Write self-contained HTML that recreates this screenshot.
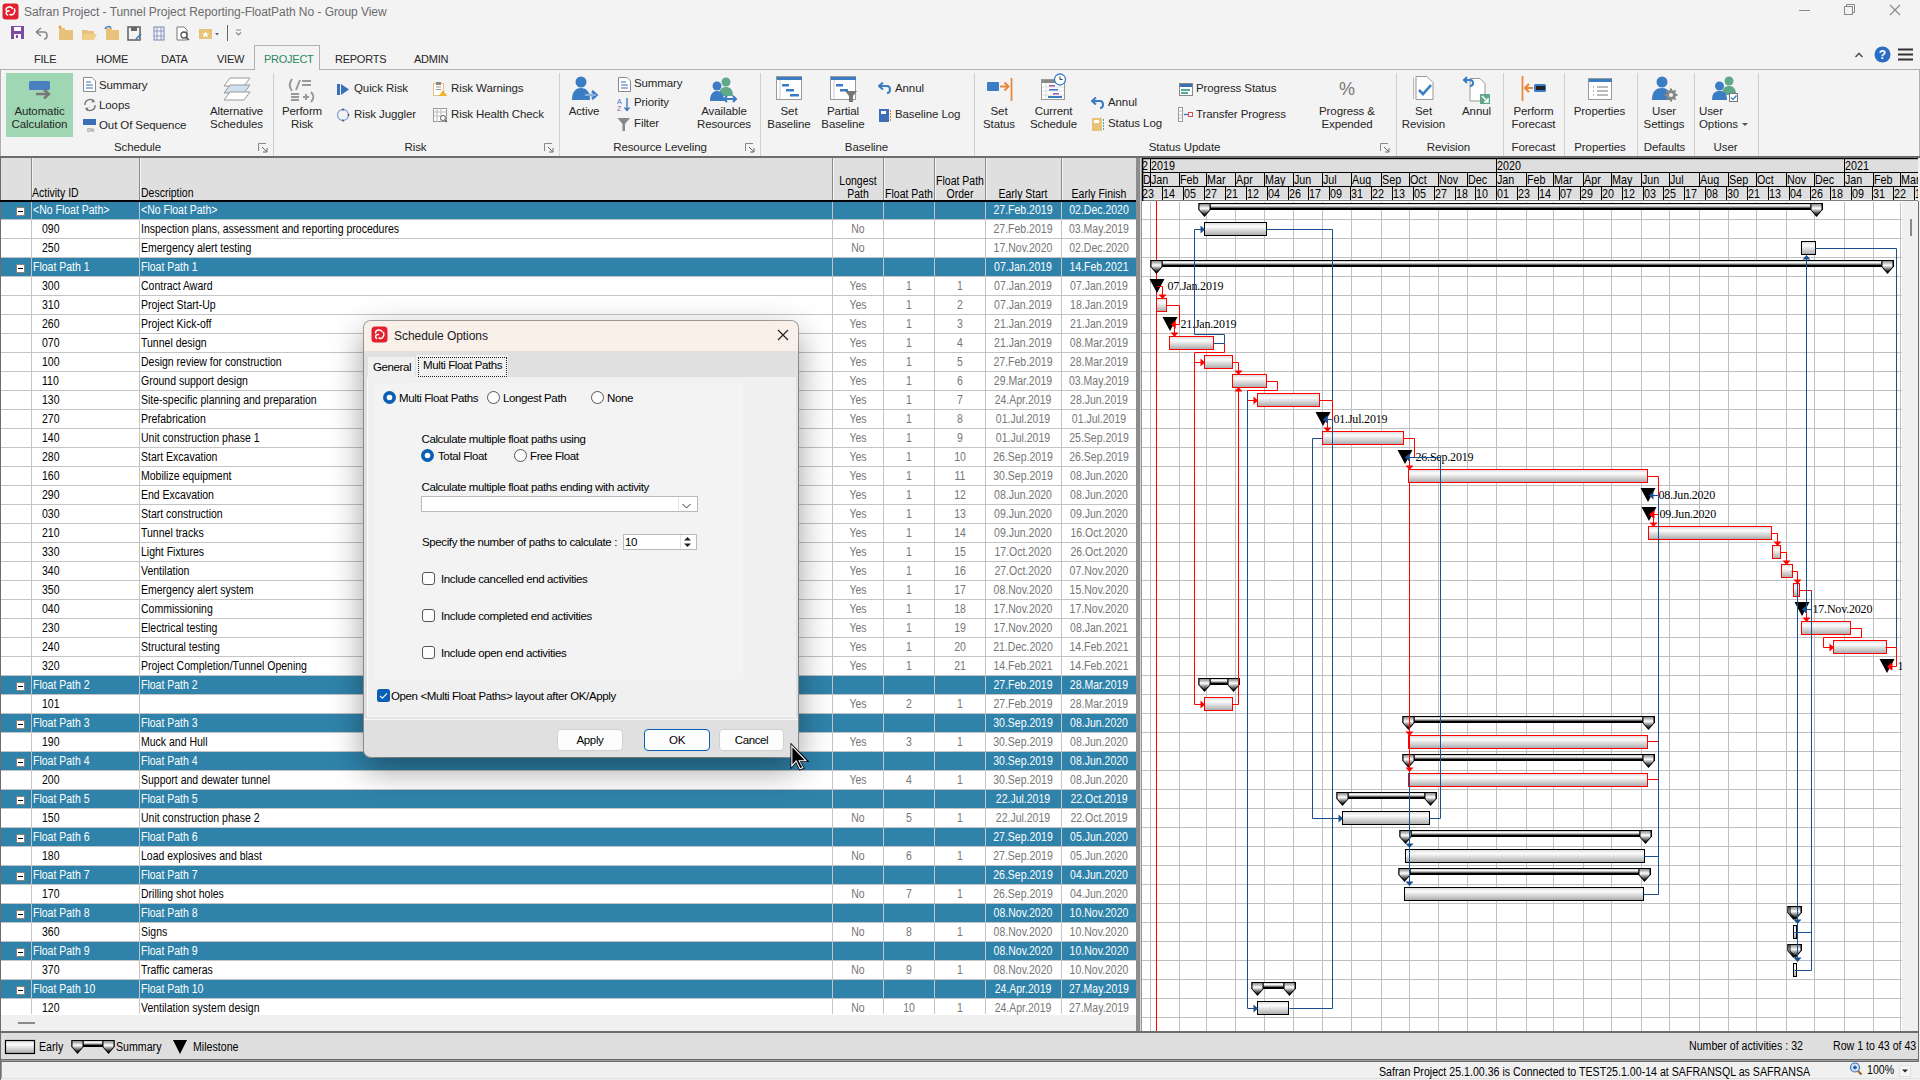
<!DOCTYPE html><html><head><meta charset="utf-8"><style>
html,body{margin:0;padding:0;width:1920px;height:1080px;overflow:hidden;background:#f3f3f3;font-family:"Liberation Sans",sans-serif;}
#root{position:relative;width:1920px;height:1080px;overflow:hidden;}
svg{position:absolute;left:0;top:0;}
</style></head><body><div id="root">
<div style="position:absolute;left:0px;top:0px;width:1920px;height:157px;background:#f3f3f3;"></div>
<svg width="20" height="22" style="left:1px;top:2px"><rect x="1.5" y="1.5" width="16" height="16" rx="3" fill="#e0202e"/>
<path d="M5 8 C5 4.5 10 4 11.5 6.5 M13.5 7 C15 10 12 14 9 12.5 M6.5 13 C4 11 5.5 8.5 8 9" stroke="#fff" stroke-width="1.6" fill="none" stroke-linecap="round"/></svg>
<div style="position:absolute;left:24px;top:6.34px;font-size:12px;line-height:12px;color:#6b6b6b;letter-spacing:-0.05px;font-family:'Liberation Sans', sans-serif;white-space:nowrap;">Safran Project - Tunnel Project Reporting-FloatPath No - Group View</div>
<svg width="1920" height="24" style="left:0;top:0">
<line x1="1799" y1="10.5" x2="1810" y2="10.5" stroke="#888" stroke-width="1"/>
<rect x="1844.5" y="6.5" width="8" height="8" fill="none" stroke="#888"/><path d="M1846.5 6.5 V4.5 H1854.5 V12.5 H1852.5" fill="none" stroke="#888"/>
<path d="M1890 5 L1900 15 M1900 5 L1890 15" stroke="#888" stroke-width="1.1"/>
</svg>
<svg width="260" height="24" style="left:0;top:22px">
<g transform="translate(11,4)"><rect x="0" y="0" width="13" height="13" fill="#7f4aa3"/><rect x="3" y="1" width="7" height="4" fill="#fff"/><rect x="3" y="8" width="7" height="5" fill="#fff"/><rect x="5" y="9" width="2" height="3" fill="#7f4aa3"/></g>
<path d="M36 10 L41 6 M36 10 L41 14 M36 10 H44 C48 10 48 17 44 17" stroke="#888" stroke-width="1.6" fill="none"/>
<g transform="translate(58,4)"><rect x="1" y="4" width="14" height="10" fill="#e8c27a"/><rect x="1" y="2" width="6" height="3" fill="#e8c27a"/><circle cx="2" cy="1" r="1.5" fill="#f0a030"/></g>
<g transform="translate(81,5)"><path d="M1 3 H6 L7 4 H13 V12 H1 Z" fill="#e8c27a"/><path d="M3 7 H16 L13 13 H1 Z" fill="#f0cf8a"/></g>
<g transform="translate(104,4)"><rect x="2" y="4" width="13" height="10" fill="#e8c27a"/><rect x="2" y="2" width="6" height="3" fill="#e8c27a"/><path d="M1 3 C2 0 6 0 7 2" stroke="#3b7dc4" stroke-width="1.5" fill="none"/></g>
<g transform="translate(127,4)"><rect x="1" y="1" width="12" height="13" fill="none" stroke="#666" stroke-width="1.6"/><rect x="4" y="1" width="6" height="4" fill="#666"/><path d="M9 13 L14 8" stroke="#3b7dc4" stroke-width="1.6"/></g>
<g transform="translate(153,4)"><rect x="1" y="1" width="10" height="13" fill="none" stroke="#7788bb" stroke-width="1"/><path d="M4 1 V14 M8 1 V14 M1 5 H11 M1 10 H11" stroke="#7788bb" stroke-width="0.8"/></g>
<g transform="translate(176,4)"><path d="M1 1 H8 L11 4 V14 H1 Z" fill="#fff" stroke="#777"/><circle cx="8" cy="9" r="3" fill="none" stroke="#555" stroke-width="1.3"/><path d="M10 11 L13 14" stroke="#555" stroke-width="1.5"/></g>
<g transform="translate(199,5)"><rect x="0" y="2" width="13" height="10" fill="#e8c27a"/><path d="M6.5 4 L7.5 6.5 L10 6.5 L8 8 L9 10.5 L6.5 9 L4 10.5 L5 8 L3 6.5 L5.5 6.5 Z" fill="#fff"/><path d="M16 6 H20 L18 8.5 Z" fill="#666"/></g>
<line x1="227.5" y1="3" x2="227.5" y2="19" stroke="#666"/>
<path d="M236 8 H241 M236 10.5 L238.5 13 L241 10.5" stroke="#888" stroke-width="1.2" fill="none"/>
</svg>
<div style="position:absolute;left:34px;top:54.49px;font-size:11px;line-height:11px;color:#262626;letter-spacing:-0.25px;font-family:'Liberation Sans', sans-serif;white-space:nowrap;">FILE</div>
<div style="position:absolute;left:96px;top:54.49px;font-size:11px;line-height:11px;color:#262626;letter-spacing:-0.25px;font-family:'Liberation Sans', sans-serif;white-space:nowrap;">HOME</div>
<div style="position:absolute;left:161px;top:54.49px;font-size:11px;line-height:11px;color:#262626;letter-spacing:-0.25px;font-family:'Liberation Sans', sans-serif;white-space:nowrap;">DATA</div>
<div style="position:absolute;left:217px;top:54.49px;font-size:11px;line-height:11px;color:#262626;letter-spacing:-0.25px;font-family:'Liberation Sans', sans-serif;white-space:nowrap;">VIEW</div>
<div style="position:absolute;left:335px;top:54.49px;font-size:11px;line-height:11px;color:#262626;letter-spacing:-0.25px;font-family:'Liberation Sans', sans-serif;white-space:nowrap;">REPORTS</div>
<div style="position:absolute;left:414px;top:54.49px;font-size:11px;line-height:11px;color:#262626;letter-spacing:-0.25px;font-family:'Liberation Sans', sans-serif;white-space:nowrap;">ADMIN</div>
<div style="position:absolute;left:254px;top:45px;width:66px;height:25px;border:1px solid #b0b0b0;border-bottom:none;background:#f3f3f3;box-sizing:border-box"></div>
<div style="position:absolute;left:264px;top:54.49px;font-size:11px;line-height:11px;color:#2b8a5e;letter-spacing:-0.25px;font-family:'Liberation Sans', sans-serif;white-space:nowrap;">PROJECT</div>
<div style="position:absolute;left:0px;top:69px;width:255px;height:1px;background:#b0b0b0;"></div>
<div style="position:absolute;left:319px;top:69px;width:1601px;height:1px;background:#b0b0b0;"></div>
<div style="position:absolute;left:0px;top:69px;width:1px;height:88px;background:#b0b0b0;"></div>
<div style="position:absolute;left:1919px;top:69px;width:1px;height:88px;background:#b0b0b0;"></div>
<svg width="80" height="24" style="left:1845px;top:43px">
<path d="M10.5 14 L14 10.5 L17.5 14" stroke="#555" stroke-width="1.6" fill="none"/>
<circle cx="37.5" cy="11.5" r="8" fill="#2b6cc4"/><text x="37.5" y="16" text-anchor="middle" font-family="Liberation Sans" font-weight="bold" font-size="12" fill="#fff">?</text>
<path d="M53 6.5 H68 M53 11.5 H68 M53 16.5 H68" stroke="#333" stroke-width="1.8"/>
</svg>
<div style="position:absolute;left:0px;top:156px;width:1920px;height:2px;background:#6d6d6d;"></div>
<div style="position:absolute;left:273px;top:73px;width:1px;height:83px;background:#d0d0d0;"></div>
<div style="position:absolute;left:559px;top:73px;width:1px;height:83px;background:#d0d0d0;"></div>
<div style="position:absolute;left:760px;top:73px;width:1px;height:83px;background:#d0d0d0;"></div>
<div style="position:absolute;left:974px;top:73px;width:1px;height:83px;background:#d0d0d0;"></div>
<div style="position:absolute;left:1396px;top:73px;width:1px;height:83px;background:#d0d0d0;"></div>
<div style="position:absolute;left:1503px;top:73px;width:1px;height:83px;background:#d0d0d0;"></div>
<div style="position:absolute;left:1564px;top:73px;width:1px;height:83px;background:#d0d0d0;"></div>
<div style="position:absolute;left:1637px;top:73px;width:1px;height:83px;background:#d0d0d0;"></div>
<div style="position:absolute;left:1694px;top:73px;width:1px;height:83px;background:#d0d0d0;"></div>
<div style="position:absolute;left:1758px;top:73px;width:1px;height:83px;background:#d0d0d0;"></div>
<div style="position:absolute;left:-12.5px;width:300px;text-align:center;top:141.67px;font-size:11.5px;line-height:11.5px;color:#262626;letter-spacing:-0.1px;font-family:'Liberation Sans', sans-serif;white-space:nowrap;">Schedule</div>
<div style="position:absolute;left:265.5px;width:300px;text-align:center;top:141.67px;font-size:11.5px;line-height:11.5px;color:#262626;letter-spacing:-0.1px;font-family:'Liberation Sans', sans-serif;white-space:nowrap;">Risk</div>
<div style="position:absolute;left:510px;width:300px;text-align:center;top:141.67px;font-size:11.5px;line-height:11.5px;color:#262626;letter-spacing:-0.1px;font-family:'Liberation Sans', sans-serif;white-space:nowrap;">Resource Leveling</div>
<div style="position:absolute;left:716.5px;width:300px;text-align:center;top:141.67px;font-size:11.5px;line-height:11.5px;color:#262626;letter-spacing:-0.1px;font-family:'Liberation Sans', sans-serif;white-space:nowrap;">Baseline</div>
<div style="position:absolute;left:1034.5px;width:300px;text-align:center;top:141.67px;font-size:11.5px;line-height:11.5px;color:#262626;letter-spacing:-0.1px;font-family:'Liberation Sans', sans-serif;white-space:nowrap;">Status Update</div>
<div style="position:absolute;left:1298.5px;width:300px;text-align:center;top:141.67px;font-size:11.5px;line-height:11.5px;color:#262626;letter-spacing:-0.1px;font-family:'Liberation Sans', sans-serif;white-space:nowrap;">Revision</div>
<div style="position:absolute;left:1383.5px;width:300px;text-align:center;top:141.67px;font-size:11.5px;line-height:11.5px;color:#262626;letter-spacing:-0.1px;font-family:'Liberation Sans', sans-serif;white-space:nowrap;">Forecast</div>
<div style="position:absolute;left:1450px;width:300px;text-align:center;top:141.67px;font-size:11.5px;line-height:11.5px;color:#262626;letter-spacing:-0.1px;font-family:'Liberation Sans', sans-serif;white-space:nowrap;">Properties</div>
<div style="position:absolute;left:1514.5px;width:300px;text-align:center;top:141.67px;font-size:11.5px;line-height:11.5px;color:#262626;letter-spacing:-0.1px;font-family:'Liberation Sans', sans-serif;white-space:nowrap;">Defaults</div>
<div style="position:absolute;left:1575.5px;width:300px;text-align:center;top:141.67px;font-size:11.5px;line-height:11.5px;color:#262626;letter-spacing:-0.1px;font-family:'Liberation Sans', sans-serif;white-space:nowrap;">User</div>
<svg width="10" height="10" style="left:258px;top:143px"><path d="M0.5 8 V0.5 H8" stroke="#888" fill="none"/><path d="M4 4 L8.5 8.5 M5 9 H9 V5" stroke="#666" fill="none"/></svg>
<svg width="10" height="10" style="left:544px;top:143px"><path d="M0.5 8 V0.5 H8" stroke="#888" fill="none"/><path d="M4 4 L8.5 8.5 M5 9 H9 V5" stroke="#666" fill="none"/></svg>
<svg width="10" height="10" style="left:745px;top:143px"><path d="M0.5 8 V0.5 H8" stroke="#888" fill="none"/><path d="M4 4 L8.5 8.5 M5 9 H9 V5" stroke="#666" fill="none"/></svg>
<svg width="10" height="10" style="left:1380px;top:143px"><path d="M0.5 8 V0.5 H8" stroke="#888" fill="none"/><path d="M4 4 L8.5 8.5 M5 9 H9 V5" stroke="#666" fill="none"/></svg>
<div style="position:absolute;left:6px;top:73px;width:67px;height:64px;background:#9fd6b3;"></div>
<svg width="40" height="30" style="left:25px;top:76px"><rect x="4" y="5" width="21" height="9" rx="1.5" fill="#4a7fc1"/>
<path d="M11 18 H24 M19 13.5 L24 18 L19 22.5" stroke="#777" stroke-width="2.4" fill="none"/></svg>
<div style="position:absolute;left:-110.5px;width:300px;text-align:center;top:105.87px;font-size:11.5px;line-height:11.5px;color:#262626;letter-spacing:-0.1px;font-family:'Liberation Sans', sans-serif;white-space:nowrap;">Automatic</div>
<div style="position:absolute;left:-110.5px;width:300px;text-align:center;top:118.97px;font-size:11.5px;line-height:11.5px;color:#262626;letter-spacing:-0.1px;font-family:'Liberation Sans', sans-serif;white-space:nowrap;">Calculation</div>
<svg width="14" height="16" style="left:83px;top:77px"><path d="M0.5 0.5 H9 L12.5 4 V14.5 H0.5 Z" fill="#fff" stroke="#8a8a8a"/><path d="M3 5 H8 M3 8 H10 M3 11 H10" stroke="#3b6fb8" stroke-width="1.2"/></svg>
<div style="position:absolute;left:99px;top:79.92px;font-size:11.5px;line-height:11.5px;color:#262626;letter-spacing:-0.1px;font-family:'Liberation Sans', sans-serif;white-space:nowrap;">Summary</div>
<svg width="16" height="16" style="left:82px;top:97px"><path d="M3 8 A5 5 0 0 1 12 4.5 M13 8 A5 5 0 0 1 4 11.5" stroke="#777" stroke-width="1.4" fill="none"/><path d="M11 2 L13 5 L9.5 5.5 Z M5 14 L3 11 L6.5 10.5 Z" fill="#777"/></svg>
<div style="position:absolute;left:99px;top:99.92px;font-size:11.5px;line-height:11.5px;color:#262626;letter-spacing:-0.1px;font-family:'Liberation Sans', sans-serif;white-space:nowrap;">Loops</div>
<svg width="16" height="16" style="left:83px;top:118px"><rect x="0" y="1" width="13" height="6" fill="#3b6fb8"/><text x="4" y="14" font-size="5" fill="#666" font-family="Liberation Sans">0%</text></svg>
<div style="position:absolute;left:99px;top:120.17px;font-size:11.5px;line-height:11.5px;color:#262626;letter-spacing:-0.1px;font-family:'Liberation Sans', sans-serif;white-space:nowrap;">Out Of Sequence</div>
<svg width="16" height="16" style="left:337px;top:83px"><rect x="0" y="1" width="3" height="11" fill="#3b6fb8"/><path d="M4 1 L12 6.5 L4 12 Z" fill="#3b6fb8"/></svg>
<div style="position:absolute;left:354px;top:83.17px;font-size:11.5px;line-height:11.5px;color:#262626;letter-spacing:-0.1px;font-family:'Liberation Sans', sans-serif;white-space:nowrap;">Quick Risk</div>
<svg width="16" height="16" style="left:336px;top:108px"><circle cx="7" cy="7" r="5.5" fill="none" stroke="#7fa7d8" stroke-width="1.3"/><circle cx="7" cy="1.5" r="1" fill="#555"/><circle cx="12.5" cy="7" r="1" fill="#555"/><circle cx="7" cy="12.5" r="1" fill="#555"/></svg>
<div style="position:absolute;left:354px;top:108.87px;font-size:11.5px;line-height:11.5px;color:#262626;letter-spacing:-0.1px;font-family:'Liberation Sans', sans-serif;white-space:nowrap;">Risk Juggler</div>
<svg width="16" height="16" style="left:433px;top:81px"><rect x="0.5" y="2.5" width="10" height="12" fill="#fff" stroke="#e8c27a"/><rect x="3" y="1" width="5" height="3" fill="#888"/><path d="M3 6 H8 M3 8.5 H8" stroke="#999"/><path d="M10 9 L14 15 H6 Z" fill="#f0b030"/></svg>
<div style="position:absolute;left:451px;top:83.17px;font-size:11.5px;line-height:11.5px;color:#262626;letter-spacing:-0.1px;font-family:'Liberation Sans', sans-serif;white-space:nowrap;">Risk Warnings</div>
<svg width="16" height="16" style="left:433px;top:108px"><rect x="0.5" y="0.5" width="13" height="13" fill="#fff" stroke="#999"/><path d="M4 0.5 V13.5 M8 0.5 V13.5 M0.5 4 H13.5 M0.5 8 H13.5" stroke="#bbb"/><circle cx="10" cy="10" r="2.5" fill="#fff" stroke="#666"/><path d="M12 12 L14 14" stroke="#666" stroke-width="1.4"/></svg>
<div style="position:absolute;left:451px;top:108.87px;font-size:11.5px;line-height:11.5px;color:#262626;letter-spacing:-0.1px;font-family:'Liberation Sans', sans-serif;white-space:nowrap;">Risk Health Check</div>
<svg width="14" height="16" style="left:618px;top:77px"><path d="M0.5 0.5 H9 L12.5 4 V14.5 H0.5 Z" fill="#fff" stroke="#8a8a8a"/><path d="M3 5 H8 M3 8 H10 M3 11 H10" stroke="#3b6fb8" stroke-width="1.2"/></svg>
<div style="position:absolute;left:634px;top:77.92px;font-size:11.5px;line-height:11.5px;color:#262626;letter-spacing:-0.1px;font-family:'Liberation Sans', sans-serif;white-space:nowrap;">Summary</div>
<svg width="16" height="16" style="left:617px;top:97px"><text x="0" y="7" font-size="7" fill="#3b6fb8" font-family="Liberation Sans">A</text><text x="0" y="14" font-size="7" fill="#9b59b6" font-family="Liberation Sans">Z</text><path d="M10 1 V13 M7.5 10.5 L10 13.5 L12.5 10.5" stroke="#3b6fb8" stroke-width="1.3" fill="none"/></svg>
<div style="position:absolute;left:634px;top:97.47px;font-size:11.5px;line-height:11.5px;color:#262626;letter-spacing:-0.1px;font-family:'Liberation Sans', sans-serif;white-space:nowrap;">Priority</div>
<svg width="16" height="16" style="left:617px;top:117px"><path d="M0.5 1 H13 L8 7 V14 H5.5 V7 Z" fill="#888"/></svg>
<div style="position:absolute;left:634px;top:117.77px;font-size:11.5px;line-height:11.5px;color:#262626;letter-spacing:-0.1px;font-family:'Liberation Sans', sans-serif;white-space:nowrap;">Filter</div>
<svg width="16" height="16" style="left:878px;top:81px"><path d="M2 5 H9 C13 5 13 12 9 12" stroke="#3b7dc4" stroke-width="2" fill="none"/><path d="M5 1.5 L1 5 L5 8.5" stroke="#3b7dc4" stroke-width="2" fill="none"/></svg>
<div style="position:absolute;left:895px;top:83.17px;font-size:11.5px;line-height:11.5px;color:#262626;letter-spacing:-0.1px;font-family:'Liberation Sans', sans-serif;white-space:nowrap;">Annul</div>
<svg width="16" height="16" style="left:878px;top:108px"><rect x="1" y="1" width="10" height="13" fill="#3b6fb8"/><rect x="3" y="3" width="5" height="3" fill="#fff"/><path d="M12.5 2 V13" stroke="#e67e22" stroke-width="1" stroke-dasharray="2 1"/></svg>
<div style="position:absolute;left:895px;top:108.87px;font-size:11.5px;line-height:11.5px;color:#262626;letter-spacing:-0.1px;font-family:'Liberation Sans', sans-serif;white-space:nowrap;">Baseline Log</div>
<svg width="16" height="16" style="left:1091px;top:96px"><path d="M2 5 H9 C13 5 13 12 9 12" stroke="#3b7dc4" stroke-width="2" fill="none"/><path d="M5 1.5 L1 5 L5 8.5" stroke="#3b7dc4" stroke-width="2" fill="none"/></svg>
<div style="position:absolute;left:1108px;top:97.47px;font-size:11.5px;line-height:11.5px;color:#262626;letter-spacing:-0.1px;font-family:'Liberation Sans', sans-serif;white-space:nowrap;">Annul</div>
<svg width="16" height="16" style="left:1091px;top:117px"><rect x="1" y="1" width="10" height="13" fill="#e8c27a"/><rect x="3" y="3" width="5" height="3" fill="#fff"/><path d="M12.5 2 V13" stroke="#4a9" stroke-width="1" stroke-dasharray="2 1"/></svg>
<div style="position:absolute;left:1108px;top:117.77px;font-size:11.5px;line-height:11.5px;color:#262626;letter-spacing:-0.1px;font-family:'Liberation Sans', sans-serif;white-space:nowrap;">Status Log</div>
<svg width="16" height="16" style="left:1179px;top:83px"><rect x="0.5" y="0.5" width="13" height="12" fill="#fff" stroke="#888"/><rect x="1" y="1" width="12" height="3" fill="#3b6fb8"/><rect x="2" y="6" width="9" height="2" fill="#5a9"/><rect x="2" y="9" width="7" height="2" fill="#5a9"/></svg>
<div style="position:absolute;left:1196px;top:83.17px;font-size:11.5px;line-height:11.5px;color:#262626;letter-spacing:-0.1px;font-family:'Liberation Sans', sans-serif;white-space:nowrap;">Progress Status</div>
<svg width="18" height="16" style="left:1178px;top:107px"><rect x="0.5" y="0.5" width="4" height="14" fill="#fff" stroke="#999"/><path d="M0.5 4 H4.5 M0.5 8 H4.5 M0.5 11 H4.5" stroke="#bbb"/><path d="M6 7.5 H10" stroke="#3b6fb8" stroke-width="1.3"/><rect x="10.5" y="5.5" width="4" height="4" fill="#fff" stroke="#e05050"/></svg>
<div style="position:absolute;left:1196px;top:108.87px;font-size:11.5px;line-height:11.5px;color:#262626;letter-spacing:-0.1px;font-family:'Liberation Sans', sans-serif;white-space:nowrap;">Transfer Progress</div>
<div style="position:absolute;left:86.5px;width:300px;text-align:center;top:105.87px;font-size:11.5px;line-height:11.5px;color:#262626;letter-spacing:-0.1px;font-family:'Liberation Sans', sans-serif;white-space:nowrap;">Alternative</div>
<div style="position:absolute;left:86.5px;width:300px;text-align:center;top:118.87px;font-size:11.5px;line-height:11.5px;color:#262626;letter-spacing:-0.1px;font-family:'Liberation Sans', sans-serif;white-space:nowrap;">Schedules</div>
<div style="position:absolute;left:152px;width:300px;text-align:center;top:105.87px;font-size:11.5px;line-height:11.5px;color:#262626;letter-spacing:-0.1px;font-family:'Liberation Sans', sans-serif;white-space:nowrap;">Perform</div>
<div style="position:absolute;left:152px;width:300px;text-align:center;top:118.87px;font-size:11.5px;line-height:11.5px;color:#262626;letter-spacing:-0.1px;font-family:'Liberation Sans', sans-serif;white-space:nowrap;">Risk</div>
<div style="position:absolute;left:434px;width:300px;text-align:center;top:105.87px;font-size:11.5px;line-height:11.5px;color:#262626;letter-spacing:-0.1px;font-family:'Liberation Sans', sans-serif;white-space:nowrap;">Active</div>
<div style="position:absolute;left:574px;width:300px;text-align:center;top:105.87px;font-size:11.5px;line-height:11.5px;color:#262626;letter-spacing:-0.1px;font-family:'Liberation Sans', sans-serif;white-space:nowrap;">Available</div>
<div style="position:absolute;left:574px;width:300px;text-align:center;top:118.87px;font-size:11.5px;line-height:11.5px;color:#262626;letter-spacing:-0.1px;font-family:'Liberation Sans', sans-serif;white-space:nowrap;">Resources</div>
<div style="position:absolute;left:639px;width:300px;text-align:center;top:105.87px;font-size:11.5px;line-height:11.5px;color:#262626;letter-spacing:-0.1px;font-family:'Liberation Sans', sans-serif;white-space:nowrap;">Set</div>
<div style="position:absolute;left:639px;width:300px;text-align:center;top:118.87px;font-size:11.5px;line-height:11.5px;color:#262626;letter-spacing:-0.1px;font-family:'Liberation Sans', sans-serif;white-space:nowrap;">Baseline</div>
<div style="position:absolute;left:693px;width:300px;text-align:center;top:105.87px;font-size:11.5px;line-height:11.5px;color:#262626;letter-spacing:-0.1px;font-family:'Liberation Sans', sans-serif;white-space:nowrap;">Partial</div>
<div style="position:absolute;left:693px;width:300px;text-align:center;top:118.87px;font-size:11.5px;line-height:11.5px;color:#262626;letter-spacing:-0.1px;font-family:'Liberation Sans', sans-serif;white-space:nowrap;">Baseline</div>
<div style="position:absolute;left:849px;width:300px;text-align:center;top:105.87px;font-size:11.5px;line-height:11.5px;color:#262626;letter-spacing:-0.1px;font-family:'Liberation Sans', sans-serif;white-space:nowrap;">Set</div>
<div style="position:absolute;left:849px;width:300px;text-align:center;top:118.87px;font-size:11.5px;line-height:11.5px;color:#262626;letter-spacing:-0.1px;font-family:'Liberation Sans', sans-serif;white-space:nowrap;">Status</div>
<div style="position:absolute;left:903.5px;width:300px;text-align:center;top:105.87px;font-size:11.5px;line-height:11.5px;color:#262626;letter-spacing:-0.1px;font-family:'Liberation Sans', sans-serif;white-space:nowrap;">Current</div>
<div style="position:absolute;left:903.5px;width:300px;text-align:center;top:118.87px;font-size:11.5px;line-height:11.5px;color:#262626;letter-spacing:-0.1px;font-family:'Liberation Sans', sans-serif;white-space:nowrap;">Schedule</div>
<div style="position:absolute;left:1197px;width:300px;text-align:center;top:105.87px;font-size:11.5px;line-height:11.5px;color:#262626;letter-spacing:-0.1px;font-family:'Liberation Sans', sans-serif;white-space:nowrap;">Progress &amp;</div>
<div style="position:absolute;left:1197px;width:300px;text-align:center;top:118.87px;font-size:11.5px;line-height:11.5px;color:#262626;letter-spacing:-0.1px;font-family:'Liberation Sans', sans-serif;white-space:nowrap;">Expended</div>
<div style="position:absolute;left:1273.5px;width:300px;text-align:center;top:105.87px;font-size:11.5px;line-height:11.5px;color:#262626;letter-spacing:-0.1px;font-family:'Liberation Sans', sans-serif;white-space:nowrap;">Set</div>
<div style="position:absolute;left:1273.5px;width:300px;text-align:center;top:118.87px;font-size:11.5px;line-height:11.5px;color:#262626;letter-spacing:-0.1px;font-family:'Liberation Sans', sans-serif;white-space:nowrap;">Revision</div>
<div style="position:absolute;left:1326.5px;width:300px;text-align:center;top:105.87px;font-size:11.5px;line-height:11.5px;color:#262626;letter-spacing:-0.1px;font-family:'Liberation Sans', sans-serif;white-space:nowrap;">Annul</div>
<div style="position:absolute;left:1383.5px;width:300px;text-align:center;top:105.87px;font-size:11.5px;line-height:11.5px;color:#262626;letter-spacing:-0.1px;font-family:'Liberation Sans', sans-serif;white-space:nowrap;">Perform</div>
<div style="position:absolute;left:1383.5px;width:300px;text-align:center;top:118.87px;font-size:11.5px;line-height:11.5px;color:#262626;letter-spacing:-0.1px;font-family:'Liberation Sans', sans-serif;white-space:nowrap;">Forecast</div>
<div style="position:absolute;left:1449.5px;width:300px;text-align:center;top:105.87px;font-size:11.5px;line-height:11.5px;color:#262626;letter-spacing:-0.1px;font-family:'Liberation Sans', sans-serif;white-space:nowrap;">Properties</div>
<div style="position:absolute;left:1514px;width:300px;text-align:center;top:105.87px;font-size:11.5px;line-height:11.5px;color:#262626;letter-spacing:-0.1px;font-family:'Liberation Sans', sans-serif;white-space:nowrap;">User</div>
<div style="position:absolute;left:1514px;width:300px;text-align:center;top:118.87px;font-size:11.5px;line-height:11.5px;color:#262626;letter-spacing:-0.1px;font-family:'Liberation Sans', sans-serif;white-space:nowrap;">Settings</div>
<div style="position:absolute;left:1699px;top:105.87px;font-size:11.5px;line-height:11.5px;color:#262626;letter-spacing:-0.1px;font-family:'Liberation Sans', sans-serif;white-space:nowrap;">User</div>
<div style="position:absolute;left:1699px;top:118.87px;font-size:11.5px;line-height:11.5px;color:#262626;letter-spacing:-0.1px;font-family:'Liberation Sans', sans-serif;white-space:nowrap;">Options</div>
<svg width="8" height="6" style="left:1742px;top:123px"><path d="M0 0 H6 L3 3 Z" fill="#555"/></svg>
<svg width="1920" height="110" style="left:0;top:70px">
<g transform="translate(224,8)"><path d="M6 0 H26 L20 8 H0 Z" fill="#fff" stroke="#999"/><path d="M6 7 H26 L20 15 H0 Z" fill="#cfe0f1" stroke="#999"/><path d="M6 14 H26 L20 22 H0 Z" fill="#fff" stroke="#999"/></g>
<g transform="translate(289,8)" fill="none" stroke="#999" stroke-width="2"><path d="M3 1 C0 5 0 9 3 13"/><path d="M7 12 L11 2"/><path d="M13 3 H22 M13 7 H22 M2 16 H10 M2 19 H10 M2 22 H10"/><path d="M14 19 H20 M17 16 V22"/><path d="M22 14 C25 17 25 21 22 24"/></g>
<g transform="translate(572,6)"><circle cx="9" cy="6" r="5.5" fill="#3b7dc4"/><path d="M0 24 C0 15 4 12 9 12 C14 12 18 15 18 24 Z" fill="#3b7dc4"/><path d="M13 19 H24 M20 15 L24.5 19 L20 23" stroke="#3b7dc4" stroke-width="2.6" fill="none"/><path d="M13 19 H24" stroke="#fff" stroke-width="0.8"/></g>
<g transform="translate(710,6)"><circle cx="16" cy="6" r="4.5" fill="#5fa88a"/><path d="M9 20 C9 13 12 11 16 11 C20 11 23 13 23 20 Z" fill="#5fa88a"/><circle cx="7" cy="10" r="4.5" fill="#3b7dc4"/><path d="M0 25 C0 18 3 15 7 15 C11 15 14 18 14 25 Z" fill="#3b7dc4"/><path d="M14 23 H26 M17 20 L14 23 L17 26 M23 20 L26 23 L23 26" stroke="#3b7dc4" stroke-width="2" fill="none"/></g>
<g transform="translate(776,6)"><rect x="0.5" y="0.5" width="25" height="23" fill="#fff" stroke="#999"/><rect x="1" y="1" width="25" height="3" fill="#3b7dc4"/><path d="M4 4 V23" stroke="#ccc"/><rect x="6" y="8" width="7" height="2.5" fill="#3b7dc4"/><rect x="10" y="13" width="8" height="2.5" fill="#3b7dc4"/><rect x="14" y="18" width="9" height="2.5" fill="#3b7dc4"/></g>
<g transform="translate(830,6)"><rect x="0.5" y="0.5" width="25" height="23" fill="#fff" stroke="#999"/><rect x="1" y="1" width="25" height="3" fill="#3b7dc4"/><path d="M4 4 V23" stroke="#ccc"/><rect x="6" y="8" width="7" height="2.5" fill="#3b7dc4"/><rect x="10" y="13" width="8" height="2.5" fill="#3b7dc4"/><path d="M15 15 H27 L23 20 V26 H19 V20 Z" fill="#777"/></g>
<g transform="translate(987,8)"><rect x="0" y="4" width="12" height="9" rx="1" fill="#3b7dc4"/><path d="M13 8.5 H21 M17.5 4.5 L21.5 8.5 L17.5 12.5" stroke="#e8883a" stroke-width="2" fill="none"/><path d="M24.5 0 V23" stroke="#e8883a" stroke-width="1.8"/></g>
<g transform="translate(1041,4)"><rect x="0.5" y="5.5" width="23" height="20" fill="#fff" stroke="#999"/><rect x="1" y="6" width="23" height="3" fill="#888"/><path d="M5 9 V25 M1 13 H23 M1 17 H23 M1 21 H23" stroke="#ddd"/><rect x="8" y="11" width="6" height="1.5" fill="#9b59b6"/><rect x="8" y="15" width="9" height="1.5" fill="#3b7dc4"/><rect x="12" y="19" width="6" height="1.5" fill="#9b59b6"/><rect x="7" y="22" width="14" height="2" fill="#3b7dc4"/><circle cx="19" cy="5.5" r="5.5" fill="#fff" stroke="#3b7dc4" stroke-width="1.3"/><path d="M19 2.5 V5.5 H21.5" stroke="#333" fill="none"/></g>
<text x="1347" y="25" text-anchor="middle" font-family="Liberation Sans" font-size="18" fill="#777">%</text>
<g transform="translate(1413,6)"><path d="M0.5 1.5 V23" stroke="#bbb"/><path d="M3 0.5 H14 L20 6.5 V23.5 H3 Z" fill="#fff" stroke="#999"/><path d="M6 14 L10 18 L18 9" stroke="#3b7dc4" stroke-width="2.6" fill="none"/></g>
<g transform="translate(1463,5)"><path d="M7 3.5 H17 L22 8.5 V26 H7 Z" fill="#fff" stroke="#999"/><path d="M2 5 H7 C11 5 11 11 7 11" stroke="#3b7dc4" stroke-width="2" fill="none"/><path d="M4 2 L1 5 L4 8" stroke="#3b7dc4" stroke-width="2" fill="none"/><rect x="17" y="19" width="10" height="10" fill="#5fa88a"/><path d="M19 21 L25 27 M21 27 H25 V23" stroke="#fff" stroke-width="1.5" fill="none"/></g>
<g transform="translate(1521,6)"><path d="M1.5 0 V25" stroke="#e8883a" stroke-width="1.8"/><path d="M4 12 H12 M8 8 L4 12 L8 16" stroke="#e8883a" stroke-width="2" fill="none"/><rect x="13" y="8" width="12" height="8" rx="1.5" fill="#3b7dc4"/><rect x="15" y="10" width="9" height="4" fill="#222"/></g>
<g transform="translate(1588,8)"><rect x="0.5" y="0.5" width="23" height="21" fill="#fff" stroke="#999"/><rect x="1" y="1" width="23" height="3" fill="#3b7dc4"/><path d="M5 9 H6 M9 9 H20 M5 13 H6 M9 13 H20 M5 17 H6 M9 17 H20" stroke="#777" stroke-width="1.1"/></g>
<g transform="translate(1652,6)"><circle cx="10" cy="6" r="5.5" fill="#3b7dc4"/><path d="M0 24 C0 15 4 12 10 12 C15 12 19 15 19 24 Z" fill="#3b7dc4"/><circle cx="19" cy="19" r="5" fill="#888"/><circle cx="19" cy="19" r="2" fill="#f3f3f3"/><path d="M19 12.5 V25.5 M12.5 19 H25.5 M14.4 14.4 L23.6 23.6 M23.6 14.4 L14.4 23.6" stroke="#888" stroke-width="2"/><circle cx="19" cy="19" r="2" fill="#f3f3f3"/></g>
<g transform="translate(1712,6)"><circle cx="17" cy="5" r="4.5" fill="#5fa88a"/><path d="M10 19 C10 12 13 10 17 10 C21 10 24 12 24 19 Z" fill="#5fa88a"/><circle cx="7.5" cy="10" r="4.5" fill="#3b7dc4"/><path d="M0 24 C0 17 3 15 7.5 15 C12 15 15 17 15 24 Z" fill="#3b7dc4"/><rect x="17.5" y="17.5" width="8" height="8" fill="#fff" stroke="#777"/><path d="M19 21.5 L21 23.5 L24.5 19.5" stroke="#3b7dc4" stroke-width="1.3" fill="none"/></g>
</svg>
<div style="position:absolute;left:0px;top:158px;width:1136px;height:43px;background:#f0f0f0;"></div>
<div style="position:absolute;left:1px;top:158px;width:1135px;height:42px;background:#dfdfdf;"></div>
<div style="position:absolute;left:0px;top:157px;width:1px;height:880px;background:#6d6d6d;"></div>
<div style="position:absolute;left:31px;top:158px;width:1px;height:42px;background:#8a8a8a;"></div>
<div style="position:absolute;left:32px;top:158px;width:1px;height:42px;background:#f4f4f4;"></div>
<div style="position:absolute;left:139px;top:158px;width:1px;height:42px;background:#8a8a8a;"></div>
<div style="position:absolute;left:140px;top:158px;width:1px;height:42px;background:#f4f4f4;"></div>
<div style="position:absolute;left:832px;top:158px;width:1px;height:42px;background:#8a8a8a;"></div>
<div style="position:absolute;left:833px;top:158px;width:1px;height:42px;background:#f4f4f4;"></div>
<div style="position:absolute;left:883px;top:158px;width:1px;height:42px;background:#8a8a8a;"></div>
<div style="position:absolute;left:884px;top:158px;width:1px;height:42px;background:#f4f4f4;"></div>
<div style="position:absolute;left:934px;top:158px;width:1px;height:42px;background:#8a8a8a;"></div>
<div style="position:absolute;left:935px;top:158px;width:1px;height:42px;background:#f4f4f4;"></div>
<div style="position:absolute;left:985px;top:158px;width:1px;height:42px;background:#8a8a8a;"></div>
<div style="position:absolute;left:986px;top:158px;width:1px;height:42px;background:#f4f4f4;"></div>
<div style="position:absolute;left:1061px;top:158px;width:1px;height:42px;background:#8a8a8a;"></div>
<div style="position:absolute;left:1062px;top:158px;width:1px;height:42px;background:#f4f4f4;"></div>
<div style="position:absolute;left:0px;top:200px;width:1136px;height:2px;background:#000;"></div>
<div style="position:absolute;left:32px;top:187.42px;font-size:12.5px;line-height:12.5px;color:#000;font-family:'Liberation Sans', sans-serif;white-space:nowrap;transform:scaleX(0.84);transform-origin:0 0;">Activity ID</div>
<div style="position:absolute;left:141px;top:187.42px;font-size:12.5px;line-height:12.5px;color:#000;font-family:'Liberation Sans', sans-serif;white-space:nowrap;transform:scaleX(0.84);transform-origin:0 0;">Description</div>
<div style="position:absolute;left:707.5px;width:300px;text-align:center;top:174.82px;font-size:12.5px;line-height:12.5px;color:#000;font-family:'Liberation Sans', sans-serif;white-space:nowrap;transform:scaleX(0.84);transform-origin:50% 0;">Longest</div>
<div style="position:absolute;left:707.5px;width:300px;text-align:center;top:187.72px;font-size:12.5px;line-height:12.5px;color:#000;font-family:'Liberation Sans', sans-serif;white-space:nowrap;transform:scaleX(0.84);transform-origin:50% 0;">Path</div>
<div style="position:absolute;left:758.5px;width:300px;text-align:center;top:187.72px;font-size:12.5px;line-height:12.5px;color:#000;font-family:'Liberation Sans', sans-serif;white-space:nowrap;transform:scaleX(0.84);transform-origin:50% 0;">Float Path</div>
<div style="position:absolute;left:809.5px;width:300px;text-align:center;top:174.82px;font-size:12.5px;line-height:12.5px;color:#000;font-family:'Liberation Sans', sans-serif;white-space:nowrap;transform:scaleX(0.84);transform-origin:50% 0;">Float Path</div>
<div style="position:absolute;left:809.5px;width:300px;text-align:center;top:187.72px;font-size:12.5px;line-height:12.5px;color:#000;font-family:'Liberation Sans', sans-serif;white-space:nowrap;transform:scaleX(0.84);transform-origin:50% 0;">Order</div>
<div style="position:absolute;left:873px;width:300px;text-align:center;top:187.72px;font-size:12.5px;line-height:12.5px;color:#000;font-family:'Liberation Sans', sans-serif;white-space:nowrap;transform:scaleX(0.84);transform-origin:50% 0;">Early Start</div>
<div style="position:absolute;left:948.5px;width:300px;text-align:center;top:187.72px;font-size:12.5px;line-height:12.5px;color:#000;font-family:'Liberation Sans', sans-serif;white-space:nowrap;transform:scaleX(0.84);transform-origin:50% 0;">Early Finish</div>
<div style="position:absolute;left:1px;top:202px;width:1135px;height:813px;background:#fff;"></div>
<div style="position:absolute;left:1px;top:202px;width:1135px;height:17px;background:#2f83ab;"></div>
<div style="position:absolute;left:1px;top:219px;width:1135px;height:1px;background:#c4c4c4;"></div>
<div style="position:absolute;left:1px;top:238px;width:1135px;height:1px;background:#c4c4c4;"></div>
<div style="position:absolute;left:1px;top:257px;width:1135px;height:1px;background:#c4c4c4;"></div>
<div style="position:absolute;left:1px;top:258px;width:1135px;height:18px;background:#2f83ab;"></div>
<div style="position:absolute;left:1px;top:276px;width:1135px;height:1px;background:#c4c4c4;"></div>
<div style="position:absolute;left:1px;top:295px;width:1135px;height:1px;background:#c4c4c4;"></div>
<div style="position:absolute;left:1px;top:314px;width:1135px;height:1px;background:#c4c4c4;"></div>
<div style="position:absolute;left:1px;top:333px;width:1135px;height:1px;background:#c4c4c4;"></div>
<div style="position:absolute;left:1px;top:352px;width:1135px;height:1px;background:#c4c4c4;"></div>
<div style="position:absolute;left:1px;top:371px;width:1135px;height:1px;background:#c4c4c4;"></div>
<div style="position:absolute;left:1px;top:390px;width:1135px;height:1px;background:#c4c4c4;"></div>
<div style="position:absolute;left:1px;top:409px;width:1135px;height:1px;background:#c4c4c4;"></div>
<div style="position:absolute;left:1px;top:428px;width:1135px;height:1px;background:#c4c4c4;"></div>
<div style="position:absolute;left:1px;top:447px;width:1135px;height:1px;background:#c4c4c4;"></div>
<div style="position:absolute;left:1px;top:466px;width:1135px;height:1px;background:#c4c4c4;"></div>
<div style="position:absolute;left:1px;top:485px;width:1135px;height:1px;background:#c4c4c4;"></div>
<div style="position:absolute;left:1px;top:504px;width:1135px;height:1px;background:#c4c4c4;"></div>
<div style="position:absolute;left:1px;top:523px;width:1135px;height:1px;background:#c4c4c4;"></div>
<div style="position:absolute;left:1px;top:542px;width:1135px;height:1px;background:#c4c4c4;"></div>
<div style="position:absolute;left:1px;top:561px;width:1135px;height:1px;background:#c4c4c4;"></div>
<div style="position:absolute;left:1px;top:580px;width:1135px;height:1px;background:#c4c4c4;"></div>
<div style="position:absolute;left:1px;top:599px;width:1135px;height:1px;background:#c4c4c4;"></div>
<div style="position:absolute;left:1px;top:618px;width:1135px;height:1px;background:#c4c4c4;"></div>
<div style="position:absolute;left:1px;top:637px;width:1135px;height:1px;background:#c4c4c4;"></div>
<div style="position:absolute;left:1px;top:656px;width:1135px;height:1px;background:#c4c4c4;"></div>
<div style="position:absolute;left:1px;top:675px;width:1135px;height:1px;background:#c4c4c4;"></div>
<div style="position:absolute;left:1px;top:676px;width:1135px;height:18px;background:#2f83ab;"></div>
<div style="position:absolute;left:1px;top:694px;width:1135px;height:1px;background:#c4c4c4;"></div>
<div style="position:absolute;left:1px;top:713px;width:1135px;height:1px;background:#c4c4c4;"></div>
<div style="position:absolute;left:1px;top:714px;width:1135px;height:18px;background:#2f83ab;"></div>
<div style="position:absolute;left:1px;top:732px;width:1135px;height:1px;background:#c4c4c4;"></div>
<div style="position:absolute;left:1px;top:751px;width:1135px;height:1px;background:#c4c4c4;"></div>
<div style="position:absolute;left:1px;top:752px;width:1135px;height:18px;background:#2f83ab;"></div>
<div style="position:absolute;left:1px;top:770px;width:1135px;height:1px;background:#c4c4c4;"></div>
<div style="position:absolute;left:1px;top:789px;width:1135px;height:1px;background:#c4c4c4;"></div>
<div style="position:absolute;left:1px;top:790px;width:1135px;height:18px;background:#2f83ab;"></div>
<div style="position:absolute;left:1px;top:808px;width:1135px;height:1px;background:#c4c4c4;"></div>
<div style="position:absolute;left:1px;top:827px;width:1135px;height:1px;background:#c4c4c4;"></div>
<div style="position:absolute;left:1px;top:828px;width:1135px;height:18px;background:#2f83ab;"></div>
<div style="position:absolute;left:1px;top:846px;width:1135px;height:1px;background:#c4c4c4;"></div>
<div style="position:absolute;left:1px;top:865px;width:1135px;height:1px;background:#c4c4c4;"></div>
<div style="position:absolute;left:1px;top:866px;width:1135px;height:18px;background:#2f83ab;"></div>
<div style="position:absolute;left:1px;top:884px;width:1135px;height:1px;background:#c4c4c4;"></div>
<div style="position:absolute;left:1px;top:903px;width:1135px;height:1px;background:#c4c4c4;"></div>
<div style="position:absolute;left:1px;top:904px;width:1135px;height:18px;background:#2f83ab;"></div>
<div style="position:absolute;left:1px;top:922px;width:1135px;height:1px;background:#c4c4c4;"></div>
<div style="position:absolute;left:1px;top:941px;width:1135px;height:1px;background:#c4c4c4;"></div>
<div style="position:absolute;left:1px;top:942px;width:1135px;height:18px;background:#2f83ab;"></div>
<div style="position:absolute;left:1px;top:960px;width:1135px;height:1px;background:#c4c4c4;"></div>
<div style="position:absolute;left:1px;top:979px;width:1135px;height:1px;background:#c4c4c4;"></div>
<div style="position:absolute;left:1px;top:980px;width:1135px;height:18px;background:#2f83ab;"></div>
<div style="position:absolute;left:1px;top:998px;width:1135px;height:1px;background:#c4c4c4;"></div>
<div style="position:absolute;left:1px;top:1017px;width:1135px;height:1px;background:#c4c4c4;"></div>
<div style="position:absolute;left:31px;top:202px;width:1px;height:812px;background:#c4c4c4;"></div>
<div style="position:absolute;left:139px;top:202px;width:1px;height:812px;background:#c4c4c4;"></div>
<div style="position:absolute;left:832px;top:202px;width:1px;height:812px;background:#c4c4c4;"></div>
<div style="position:absolute;left:883px;top:202px;width:1px;height:812px;background:#c4c4c4;"></div>
<div style="position:absolute;left:934px;top:202px;width:1px;height:812px;background:#c4c4c4;"></div>
<div style="position:absolute;left:985px;top:202px;width:1px;height:812px;background:#c4c4c4;"></div>
<div style="position:absolute;left:1061px;top:202px;width:1px;height:812px;background:#c4c4c4;"></div>
<div style="position:absolute;left:16px;top:207px;width:7px;height:7px;border:1px solid #8c8577;background:#fff"></div>
<div style="position:absolute;left:18px;top:211px;width:5px;height:1px;background:#000;"></div>
<div style="position:absolute;left:32.5px;top:203.72px;font-size:12.5px;line-height:12.5px;color:#fff;font-family:'Liberation Sans', sans-serif;white-space:nowrap;transform:scaleX(0.84);transform-origin:0 0;">&lt;No Float Path&gt;</div>
<div style="position:absolute;left:141px;top:203.72px;font-size:12.5px;line-height:12.5px;color:#fff;font-family:'Liberation Sans', sans-serif;white-space:nowrap;transform:scaleX(0.84);transform-origin:0 0;">&lt;No Float Path&gt;</div>
<div style="position:absolute;left:873px;width:300px;text-align:center;top:203.72px;font-size:12.5px;line-height:12.5px;color:#fff;font-family:'Liberation Sans', sans-serif;white-space:nowrap;transform:scaleX(0.84);transform-origin:50% 0;">27.Feb.2019</div>
<div style="position:absolute;left:948.5px;width:300px;text-align:center;top:203.72px;font-size:12.5px;line-height:12.5px;color:#fff;font-family:'Liberation Sans', sans-serif;white-space:nowrap;transform:scaleX(0.84);transform-origin:50% 0;">02.Dec.2020</div>
<div style="position:absolute;left:42px;top:222.72px;font-size:12.5px;line-height:12.5px;color:#000;font-family:'Liberation Sans', sans-serif;white-space:nowrap;transform:scaleX(0.84);transform-origin:0 0;">090</div>
<div style="position:absolute;left:141px;top:222.72px;font-size:12.5px;line-height:12.5px;color:#000;font-family:'Liberation Sans', sans-serif;white-space:nowrap;transform:scaleX(0.84);transform-origin:0 0;">Inspection plans, assessment and reporting procedures</div>
<div style="position:absolute;left:707.5px;width:300px;text-align:center;top:222.72px;font-size:12.5px;line-height:12.5px;color:#767676;font-family:'Liberation Sans', sans-serif;white-space:nowrap;transform:scaleX(0.84);transform-origin:50% 0;">No</div>
<div style="position:absolute;left:758.5px;width:300px;text-align:center;top:222.72px;font-size:12.5px;line-height:12.5px;color:#767676;font-family:'Liberation Sans', sans-serif;white-space:nowrap;transform:scaleX(0.84);transform-origin:50% 0;"></div>
<div style="position:absolute;left:809.5px;width:300px;text-align:center;top:222.72px;font-size:12.5px;line-height:12.5px;color:#767676;font-family:'Liberation Sans', sans-serif;white-space:nowrap;transform:scaleX(0.84);transform-origin:50% 0;"></div>
<div style="position:absolute;left:873px;width:300px;text-align:center;top:222.72px;font-size:12.5px;line-height:12.5px;color:#767676;font-family:'Liberation Sans', sans-serif;white-space:nowrap;transform:scaleX(0.84);transform-origin:50% 0;">27.Feb.2019</div>
<div style="position:absolute;left:948.5px;width:300px;text-align:center;top:222.72px;font-size:12.5px;line-height:12.5px;color:#767676;font-family:'Liberation Sans', sans-serif;white-space:nowrap;transform:scaleX(0.84);transform-origin:50% 0;">03.May.2019</div>
<div style="position:absolute;left:42px;top:241.72px;font-size:12.5px;line-height:12.5px;color:#000;font-family:'Liberation Sans', sans-serif;white-space:nowrap;transform:scaleX(0.84);transform-origin:0 0;">250</div>
<div style="position:absolute;left:141px;top:241.72px;font-size:12.5px;line-height:12.5px;color:#000;font-family:'Liberation Sans', sans-serif;white-space:nowrap;transform:scaleX(0.84);transform-origin:0 0;">Emergency alert testing</div>
<div style="position:absolute;left:707.5px;width:300px;text-align:center;top:241.72px;font-size:12.5px;line-height:12.5px;color:#767676;font-family:'Liberation Sans', sans-serif;white-space:nowrap;transform:scaleX(0.84);transform-origin:50% 0;">No</div>
<div style="position:absolute;left:758.5px;width:300px;text-align:center;top:241.72px;font-size:12.5px;line-height:12.5px;color:#767676;font-family:'Liberation Sans', sans-serif;white-space:nowrap;transform:scaleX(0.84);transform-origin:50% 0;"></div>
<div style="position:absolute;left:809.5px;width:300px;text-align:center;top:241.72px;font-size:12.5px;line-height:12.5px;color:#767676;font-family:'Liberation Sans', sans-serif;white-space:nowrap;transform:scaleX(0.84);transform-origin:50% 0;"></div>
<div style="position:absolute;left:873px;width:300px;text-align:center;top:241.72px;font-size:12.5px;line-height:12.5px;color:#767676;font-family:'Liberation Sans', sans-serif;white-space:nowrap;transform:scaleX(0.84);transform-origin:50% 0;">17.Nov.2020</div>
<div style="position:absolute;left:948.5px;width:300px;text-align:center;top:241.72px;font-size:12.5px;line-height:12.5px;color:#767676;font-family:'Liberation Sans', sans-serif;white-space:nowrap;transform:scaleX(0.84);transform-origin:50% 0;">02.Dec.2020</div>
<div style="position:absolute;left:16px;top:264px;width:7px;height:7px;border:1px solid #8c8577;background:#fff"></div>
<div style="position:absolute;left:18px;top:268px;width:5px;height:1px;background:#000;"></div>
<div style="position:absolute;left:32.5px;top:260.72px;font-size:12.5px;line-height:12.5px;color:#fff;font-family:'Liberation Sans', sans-serif;white-space:nowrap;transform:scaleX(0.84);transform-origin:0 0;">Float Path 1</div>
<div style="position:absolute;left:141px;top:260.72px;font-size:12.5px;line-height:12.5px;color:#fff;font-family:'Liberation Sans', sans-serif;white-space:nowrap;transform:scaleX(0.84);transform-origin:0 0;">Float Path 1</div>
<div style="position:absolute;left:873px;width:300px;text-align:center;top:260.72px;font-size:12.5px;line-height:12.5px;color:#fff;font-family:'Liberation Sans', sans-serif;white-space:nowrap;transform:scaleX(0.84);transform-origin:50% 0;">07.Jan.2019</div>
<div style="position:absolute;left:948.5px;width:300px;text-align:center;top:260.72px;font-size:12.5px;line-height:12.5px;color:#fff;font-family:'Liberation Sans', sans-serif;white-space:nowrap;transform:scaleX(0.84);transform-origin:50% 0;">14.Feb.2021</div>
<div style="position:absolute;left:42px;top:279.72px;font-size:12.5px;line-height:12.5px;color:#000;font-family:'Liberation Sans', sans-serif;white-space:nowrap;transform:scaleX(0.84);transform-origin:0 0;">300</div>
<div style="position:absolute;left:141px;top:279.72px;font-size:12.5px;line-height:12.5px;color:#000;font-family:'Liberation Sans', sans-serif;white-space:nowrap;transform:scaleX(0.84);transform-origin:0 0;">Contract Award</div>
<div style="position:absolute;left:707.5px;width:300px;text-align:center;top:279.72px;font-size:12.5px;line-height:12.5px;color:#767676;font-family:'Liberation Sans', sans-serif;white-space:nowrap;transform:scaleX(0.84);transform-origin:50% 0;">Yes</div>
<div style="position:absolute;left:758.5px;width:300px;text-align:center;top:279.72px;font-size:12.5px;line-height:12.5px;color:#767676;font-family:'Liberation Sans', sans-serif;white-space:nowrap;transform:scaleX(0.84);transform-origin:50% 0;">1</div>
<div style="position:absolute;left:809.5px;width:300px;text-align:center;top:279.72px;font-size:12.5px;line-height:12.5px;color:#767676;font-family:'Liberation Sans', sans-serif;white-space:nowrap;transform:scaleX(0.84);transform-origin:50% 0;">1</div>
<div style="position:absolute;left:873px;width:300px;text-align:center;top:279.72px;font-size:12.5px;line-height:12.5px;color:#767676;font-family:'Liberation Sans', sans-serif;white-space:nowrap;transform:scaleX(0.84);transform-origin:50% 0;">07.Jan.2019</div>
<div style="position:absolute;left:948.5px;width:300px;text-align:center;top:279.72px;font-size:12.5px;line-height:12.5px;color:#767676;font-family:'Liberation Sans', sans-serif;white-space:nowrap;transform:scaleX(0.84);transform-origin:50% 0;">07.Jan.2019</div>
<div style="position:absolute;left:42px;top:298.72px;font-size:12.5px;line-height:12.5px;color:#000;font-family:'Liberation Sans', sans-serif;white-space:nowrap;transform:scaleX(0.84);transform-origin:0 0;">310</div>
<div style="position:absolute;left:141px;top:298.72px;font-size:12.5px;line-height:12.5px;color:#000;font-family:'Liberation Sans', sans-serif;white-space:nowrap;transform:scaleX(0.84);transform-origin:0 0;">Project Start-Up</div>
<div style="position:absolute;left:707.5px;width:300px;text-align:center;top:298.72px;font-size:12.5px;line-height:12.5px;color:#767676;font-family:'Liberation Sans', sans-serif;white-space:nowrap;transform:scaleX(0.84);transform-origin:50% 0;">Yes</div>
<div style="position:absolute;left:758.5px;width:300px;text-align:center;top:298.72px;font-size:12.5px;line-height:12.5px;color:#767676;font-family:'Liberation Sans', sans-serif;white-space:nowrap;transform:scaleX(0.84);transform-origin:50% 0;">1</div>
<div style="position:absolute;left:809.5px;width:300px;text-align:center;top:298.72px;font-size:12.5px;line-height:12.5px;color:#767676;font-family:'Liberation Sans', sans-serif;white-space:nowrap;transform:scaleX(0.84);transform-origin:50% 0;">2</div>
<div style="position:absolute;left:873px;width:300px;text-align:center;top:298.72px;font-size:12.5px;line-height:12.5px;color:#767676;font-family:'Liberation Sans', sans-serif;white-space:nowrap;transform:scaleX(0.84);transform-origin:50% 0;">07.Jan.2019</div>
<div style="position:absolute;left:948.5px;width:300px;text-align:center;top:298.72px;font-size:12.5px;line-height:12.5px;color:#767676;font-family:'Liberation Sans', sans-serif;white-space:nowrap;transform:scaleX(0.84);transform-origin:50% 0;">18.Jan.2019</div>
<div style="position:absolute;left:42px;top:317.72px;font-size:12.5px;line-height:12.5px;color:#000;font-family:'Liberation Sans', sans-serif;white-space:nowrap;transform:scaleX(0.84);transform-origin:0 0;">260</div>
<div style="position:absolute;left:141px;top:317.72px;font-size:12.5px;line-height:12.5px;color:#000;font-family:'Liberation Sans', sans-serif;white-space:nowrap;transform:scaleX(0.84);transform-origin:0 0;">Project Kick-off</div>
<div style="position:absolute;left:707.5px;width:300px;text-align:center;top:317.72px;font-size:12.5px;line-height:12.5px;color:#767676;font-family:'Liberation Sans', sans-serif;white-space:nowrap;transform:scaleX(0.84);transform-origin:50% 0;">Yes</div>
<div style="position:absolute;left:758.5px;width:300px;text-align:center;top:317.72px;font-size:12.5px;line-height:12.5px;color:#767676;font-family:'Liberation Sans', sans-serif;white-space:nowrap;transform:scaleX(0.84);transform-origin:50% 0;">1</div>
<div style="position:absolute;left:809.5px;width:300px;text-align:center;top:317.72px;font-size:12.5px;line-height:12.5px;color:#767676;font-family:'Liberation Sans', sans-serif;white-space:nowrap;transform:scaleX(0.84);transform-origin:50% 0;">3</div>
<div style="position:absolute;left:873px;width:300px;text-align:center;top:317.72px;font-size:12.5px;line-height:12.5px;color:#767676;font-family:'Liberation Sans', sans-serif;white-space:nowrap;transform:scaleX(0.84);transform-origin:50% 0;">21.Jan.2019</div>
<div style="position:absolute;left:948.5px;width:300px;text-align:center;top:317.72px;font-size:12.5px;line-height:12.5px;color:#767676;font-family:'Liberation Sans', sans-serif;white-space:nowrap;transform:scaleX(0.84);transform-origin:50% 0;">21.Jan.2019</div>
<div style="position:absolute;left:42px;top:336.72px;font-size:12.5px;line-height:12.5px;color:#000;font-family:'Liberation Sans', sans-serif;white-space:nowrap;transform:scaleX(0.84);transform-origin:0 0;">070</div>
<div style="position:absolute;left:141px;top:336.72px;font-size:12.5px;line-height:12.5px;color:#000;font-family:'Liberation Sans', sans-serif;white-space:nowrap;transform:scaleX(0.84);transform-origin:0 0;">Tunnel design</div>
<div style="position:absolute;left:707.5px;width:300px;text-align:center;top:336.72px;font-size:12.5px;line-height:12.5px;color:#767676;font-family:'Liberation Sans', sans-serif;white-space:nowrap;transform:scaleX(0.84);transform-origin:50% 0;">Yes</div>
<div style="position:absolute;left:758.5px;width:300px;text-align:center;top:336.72px;font-size:12.5px;line-height:12.5px;color:#767676;font-family:'Liberation Sans', sans-serif;white-space:nowrap;transform:scaleX(0.84);transform-origin:50% 0;">1</div>
<div style="position:absolute;left:809.5px;width:300px;text-align:center;top:336.72px;font-size:12.5px;line-height:12.5px;color:#767676;font-family:'Liberation Sans', sans-serif;white-space:nowrap;transform:scaleX(0.84);transform-origin:50% 0;">4</div>
<div style="position:absolute;left:873px;width:300px;text-align:center;top:336.72px;font-size:12.5px;line-height:12.5px;color:#767676;font-family:'Liberation Sans', sans-serif;white-space:nowrap;transform:scaleX(0.84);transform-origin:50% 0;">21.Jan.2019</div>
<div style="position:absolute;left:948.5px;width:300px;text-align:center;top:336.72px;font-size:12.5px;line-height:12.5px;color:#767676;font-family:'Liberation Sans', sans-serif;white-space:nowrap;transform:scaleX(0.84);transform-origin:50% 0;">08.Mar.2019</div>
<div style="position:absolute;left:42px;top:355.72px;font-size:12.5px;line-height:12.5px;color:#000;font-family:'Liberation Sans', sans-serif;white-space:nowrap;transform:scaleX(0.84);transform-origin:0 0;">100</div>
<div style="position:absolute;left:141px;top:355.72px;font-size:12.5px;line-height:12.5px;color:#000;font-family:'Liberation Sans', sans-serif;white-space:nowrap;transform:scaleX(0.84);transform-origin:0 0;">Design review for construction</div>
<div style="position:absolute;left:707.5px;width:300px;text-align:center;top:355.72px;font-size:12.5px;line-height:12.5px;color:#767676;font-family:'Liberation Sans', sans-serif;white-space:nowrap;transform:scaleX(0.84);transform-origin:50% 0;">Yes</div>
<div style="position:absolute;left:758.5px;width:300px;text-align:center;top:355.72px;font-size:12.5px;line-height:12.5px;color:#767676;font-family:'Liberation Sans', sans-serif;white-space:nowrap;transform:scaleX(0.84);transform-origin:50% 0;">1</div>
<div style="position:absolute;left:809.5px;width:300px;text-align:center;top:355.72px;font-size:12.5px;line-height:12.5px;color:#767676;font-family:'Liberation Sans', sans-serif;white-space:nowrap;transform:scaleX(0.84);transform-origin:50% 0;">5</div>
<div style="position:absolute;left:873px;width:300px;text-align:center;top:355.72px;font-size:12.5px;line-height:12.5px;color:#767676;font-family:'Liberation Sans', sans-serif;white-space:nowrap;transform:scaleX(0.84);transform-origin:50% 0;">27.Feb.2019</div>
<div style="position:absolute;left:948.5px;width:300px;text-align:center;top:355.72px;font-size:12.5px;line-height:12.5px;color:#767676;font-family:'Liberation Sans', sans-serif;white-space:nowrap;transform:scaleX(0.84);transform-origin:50% 0;">28.Mar.2019</div>
<div style="position:absolute;left:42px;top:374.72px;font-size:12.5px;line-height:12.5px;color:#000;font-family:'Liberation Sans', sans-serif;white-space:nowrap;transform:scaleX(0.84);transform-origin:0 0;">110</div>
<div style="position:absolute;left:141px;top:374.72px;font-size:12.5px;line-height:12.5px;color:#000;font-family:'Liberation Sans', sans-serif;white-space:nowrap;transform:scaleX(0.84);transform-origin:0 0;">Ground support design</div>
<div style="position:absolute;left:707.5px;width:300px;text-align:center;top:374.72px;font-size:12.5px;line-height:12.5px;color:#767676;font-family:'Liberation Sans', sans-serif;white-space:nowrap;transform:scaleX(0.84);transform-origin:50% 0;">Yes</div>
<div style="position:absolute;left:758.5px;width:300px;text-align:center;top:374.72px;font-size:12.5px;line-height:12.5px;color:#767676;font-family:'Liberation Sans', sans-serif;white-space:nowrap;transform:scaleX(0.84);transform-origin:50% 0;">1</div>
<div style="position:absolute;left:809.5px;width:300px;text-align:center;top:374.72px;font-size:12.5px;line-height:12.5px;color:#767676;font-family:'Liberation Sans', sans-serif;white-space:nowrap;transform:scaleX(0.84);transform-origin:50% 0;">6</div>
<div style="position:absolute;left:873px;width:300px;text-align:center;top:374.72px;font-size:12.5px;line-height:12.5px;color:#767676;font-family:'Liberation Sans', sans-serif;white-space:nowrap;transform:scaleX(0.84);transform-origin:50% 0;">29.Mar.2019</div>
<div style="position:absolute;left:948.5px;width:300px;text-align:center;top:374.72px;font-size:12.5px;line-height:12.5px;color:#767676;font-family:'Liberation Sans', sans-serif;white-space:nowrap;transform:scaleX(0.84);transform-origin:50% 0;">03.May.2019</div>
<div style="position:absolute;left:42px;top:393.72px;font-size:12.5px;line-height:12.5px;color:#000;font-family:'Liberation Sans', sans-serif;white-space:nowrap;transform:scaleX(0.84);transform-origin:0 0;">130</div>
<div style="position:absolute;left:141px;top:393.72px;font-size:12.5px;line-height:12.5px;color:#000;font-family:'Liberation Sans', sans-serif;white-space:nowrap;transform:scaleX(0.84);transform-origin:0 0;">Site-specific planning and preparation</div>
<div style="position:absolute;left:707.5px;width:300px;text-align:center;top:393.72px;font-size:12.5px;line-height:12.5px;color:#767676;font-family:'Liberation Sans', sans-serif;white-space:nowrap;transform:scaleX(0.84);transform-origin:50% 0;">Yes</div>
<div style="position:absolute;left:758.5px;width:300px;text-align:center;top:393.72px;font-size:12.5px;line-height:12.5px;color:#767676;font-family:'Liberation Sans', sans-serif;white-space:nowrap;transform:scaleX(0.84);transform-origin:50% 0;">1</div>
<div style="position:absolute;left:809.5px;width:300px;text-align:center;top:393.72px;font-size:12.5px;line-height:12.5px;color:#767676;font-family:'Liberation Sans', sans-serif;white-space:nowrap;transform:scaleX(0.84);transform-origin:50% 0;">7</div>
<div style="position:absolute;left:873px;width:300px;text-align:center;top:393.72px;font-size:12.5px;line-height:12.5px;color:#767676;font-family:'Liberation Sans', sans-serif;white-space:nowrap;transform:scaleX(0.84);transform-origin:50% 0;">24.Apr.2019</div>
<div style="position:absolute;left:948.5px;width:300px;text-align:center;top:393.72px;font-size:12.5px;line-height:12.5px;color:#767676;font-family:'Liberation Sans', sans-serif;white-space:nowrap;transform:scaleX(0.84);transform-origin:50% 0;">28.Jun.2019</div>
<div style="position:absolute;left:42px;top:412.72px;font-size:12.5px;line-height:12.5px;color:#000;font-family:'Liberation Sans', sans-serif;white-space:nowrap;transform:scaleX(0.84);transform-origin:0 0;">270</div>
<div style="position:absolute;left:141px;top:412.72px;font-size:12.5px;line-height:12.5px;color:#000;font-family:'Liberation Sans', sans-serif;white-space:nowrap;transform:scaleX(0.84);transform-origin:0 0;">Prefabrication</div>
<div style="position:absolute;left:707.5px;width:300px;text-align:center;top:412.72px;font-size:12.5px;line-height:12.5px;color:#767676;font-family:'Liberation Sans', sans-serif;white-space:nowrap;transform:scaleX(0.84);transform-origin:50% 0;">Yes</div>
<div style="position:absolute;left:758.5px;width:300px;text-align:center;top:412.72px;font-size:12.5px;line-height:12.5px;color:#767676;font-family:'Liberation Sans', sans-serif;white-space:nowrap;transform:scaleX(0.84);transform-origin:50% 0;">1</div>
<div style="position:absolute;left:809.5px;width:300px;text-align:center;top:412.72px;font-size:12.5px;line-height:12.5px;color:#767676;font-family:'Liberation Sans', sans-serif;white-space:nowrap;transform:scaleX(0.84);transform-origin:50% 0;">8</div>
<div style="position:absolute;left:873px;width:300px;text-align:center;top:412.72px;font-size:12.5px;line-height:12.5px;color:#767676;font-family:'Liberation Sans', sans-serif;white-space:nowrap;transform:scaleX(0.84);transform-origin:50% 0;">01.Jul.2019</div>
<div style="position:absolute;left:948.5px;width:300px;text-align:center;top:412.72px;font-size:12.5px;line-height:12.5px;color:#767676;font-family:'Liberation Sans', sans-serif;white-space:nowrap;transform:scaleX(0.84);transform-origin:50% 0;">01.Jul.2019</div>
<div style="position:absolute;left:42px;top:431.72px;font-size:12.5px;line-height:12.5px;color:#000;font-family:'Liberation Sans', sans-serif;white-space:nowrap;transform:scaleX(0.84);transform-origin:0 0;">140</div>
<div style="position:absolute;left:141px;top:431.72px;font-size:12.5px;line-height:12.5px;color:#000;font-family:'Liberation Sans', sans-serif;white-space:nowrap;transform:scaleX(0.84);transform-origin:0 0;">Unit construction phase 1</div>
<div style="position:absolute;left:707.5px;width:300px;text-align:center;top:431.72px;font-size:12.5px;line-height:12.5px;color:#767676;font-family:'Liberation Sans', sans-serif;white-space:nowrap;transform:scaleX(0.84);transform-origin:50% 0;">Yes</div>
<div style="position:absolute;left:758.5px;width:300px;text-align:center;top:431.72px;font-size:12.5px;line-height:12.5px;color:#767676;font-family:'Liberation Sans', sans-serif;white-space:nowrap;transform:scaleX(0.84);transform-origin:50% 0;">1</div>
<div style="position:absolute;left:809.5px;width:300px;text-align:center;top:431.72px;font-size:12.5px;line-height:12.5px;color:#767676;font-family:'Liberation Sans', sans-serif;white-space:nowrap;transform:scaleX(0.84);transform-origin:50% 0;">9</div>
<div style="position:absolute;left:873px;width:300px;text-align:center;top:431.72px;font-size:12.5px;line-height:12.5px;color:#767676;font-family:'Liberation Sans', sans-serif;white-space:nowrap;transform:scaleX(0.84);transform-origin:50% 0;">01.Jul.2019</div>
<div style="position:absolute;left:948.5px;width:300px;text-align:center;top:431.72px;font-size:12.5px;line-height:12.5px;color:#767676;font-family:'Liberation Sans', sans-serif;white-space:nowrap;transform:scaleX(0.84);transform-origin:50% 0;">25.Sep.2019</div>
<div style="position:absolute;left:42px;top:450.72px;font-size:12.5px;line-height:12.5px;color:#000;font-family:'Liberation Sans', sans-serif;white-space:nowrap;transform:scaleX(0.84);transform-origin:0 0;">280</div>
<div style="position:absolute;left:141px;top:450.72px;font-size:12.5px;line-height:12.5px;color:#000;font-family:'Liberation Sans', sans-serif;white-space:nowrap;transform:scaleX(0.84);transform-origin:0 0;">Start Excavation</div>
<div style="position:absolute;left:707.5px;width:300px;text-align:center;top:450.72px;font-size:12.5px;line-height:12.5px;color:#767676;font-family:'Liberation Sans', sans-serif;white-space:nowrap;transform:scaleX(0.84);transform-origin:50% 0;">Yes</div>
<div style="position:absolute;left:758.5px;width:300px;text-align:center;top:450.72px;font-size:12.5px;line-height:12.5px;color:#767676;font-family:'Liberation Sans', sans-serif;white-space:nowrap;transform:scaleX(0.84);transform-origin:50% 0;">1</div>
<div style="position:absolute;left:809.5px;width:300px;text-align:center;top:450.72px;font-size:12.5px;line-height:12.5px;color:#767676;font-family:'Liberation Sans', sans-serif;white-space:nowrap;transform:scaleX(0.84);transform-origin:50% 0;">10</div>
<div style="position:absolute;left:873px;width:300px;text-align:center;top:450.72px;font-size:12.5px;line-height:12.5px;color:#767676;font-family:'Liberation Sans', sans-serif;white-space:nowrap;transform:scaleX(0.84);transform-origin:50% 0;">26.Sep.2019</div>
<div style="position:absolute;left:948.5px;width:300px;text-align:center;top:450.72px;font-size:12.5px;line-height:12.5px;color:#767676;font-family:'Liberation Sans', sans-serif;white-space:nowrap;transform:scaleX(0.84);transform-origin:50% 0;">26.Sep.2019</div>
<div style="position:absolute;left:42px;top:469.72px;font-size:12.5px;line-height:12.5px;color:#000;font-family:'Liberation Sans', sans-serif;white-space:nowrap;transform:scaleX(0.84);transform-origin:0 0;">160</div>
<div style="position:absolute;left:141px;top:469.72px;font-size:12.5px;line-height:12.5px;color:#000;font-family:'Liberation Sans', sans-serif;white-space:nowrap;transform:scaleX(0.84);transform-origin:0 0;">Mobilize equipment</div>
<div style="position:absolute;left:707.5px;width:300px;text-align:center;top:469.72px;font-size:12.5px;line-height:12.5px;color:#767676;font-family:'Liberation Sans', sans-serif;white-space:nowrap;transform:scaleX(0.84);transform-origin:50% 0;">Yes</div>
<div style="position:absolute;left:758.5px;width:300px;text-align:center;top:469.72px;font-size:12.5px;line-height:12.5px;color:#767676;font-family:'Liberation Sans', sans-serif;white-space:nowrap;transform:scaleX(0.84);transform-origin:50% 0;">1</div>
<div style="position:absolute;left:809.5px;width:300px;text-align:center;top:469.72px;font-size:12.5px;line-height:12.5px;color:#767676;font-family:'Liberation Sans', sans-serif;white-space:nowrap;transform:scaleX(0.84);transform-origin:50% 0;">11</div>
<div style="position:absolute;left:873px;width:300px;text-align:center;top:469.72px;font-size:12.5px;line-height:12.5px;color:#767676;font-family:'Liberation Sans', sans-serif;white-space:nowrap;transform:scaleX(0.84);transform-origin:50% 0;">30.Sep.2019</div>
<div style="position:absolute;left:948.5px;width:300px;text-align:center;top:469.72px;font-size:12.5px;line-height:12.5px;color:#767676;font-family:'Liberation Sans', sans-serif;white-space:nowrap;transform:scaleX(0.84);transform-origin:50% 0;">08.Jun.2020</div>
<div style="position:absolute;left:42px;top:488.72px;font-size:12.5px;line-height:12.5px;color:#000;font-family:'Liberation Sans', sans-serif;white-space:nowrap;transform:scaleX(0.84);transform-origin:0 0;">290</div>
<div style="position:absolute;left:141px;top:488.72px;font-size:12.5px;line-height:12.5px;color:#000;font-family:'Liberation Sans', sans-serif;white-space:nowrap;transform:scaleX(0.84);transform-origin:0 0;">End Excavation</div>
<div style="position:absolute;left:707.5px;width:300px;text-align:center;top:488.72px;font-size:12.5px;line-height:12.5px;color:#767676;font-family:'Liberation Sans', sans-serif;white-space:nowrap;transform:scaleX(0.84);transform-origin:50% 0;">Yes</div>
<div style="position:absolute;left:758.5px;width:300px;text-align:center;top:488.72px;font-size:12.5px;line-height:12.5px;color:#767676;font-family:'Liberation Sans', sans-serif;white-space:nowrap;transform:scaleX(0.84);transform-origin:50% 0;">1</div>
<div style="position:absolute;left:809.5px;width:300px;text-align:center;top:488.72px;font-size:12.5px;line-height:12.5px;color:#767676;font-family:'Liberation Sans', sans-serif;white-space:nowrap;transform:scaleX(0.84);transform-origin:50% 0;">12</div>
<div style="position:absolute;left:873px;width:300px;text-align:center;top:488.72px;font-size:12.5px;line-height:12.5px;color:#767676;font-family:'Liberation Sans', sans-serif;white-space:nowrap;transform:scaleX(0.84);transform-origin:50% 0;">08.Jun.2020</div>
<div style="position:absolute;left:948.5px;width:300px;text-align:center;top:488.72px;font-size:12.5px;line-height:12.5px;color:#767676;font-family:'Liberation Sans', sans-serif;white-space:nowrap;transform:scaleX(0.84);transform-origin:50% 0;">08.Jun.2020</div>
<div style="position:absolute;left:42px;top:507.72px;font-size:12.5px;line-height:12.5px;color:#000;font-family:'Liberation Sans', sans-serif;white-space:nowrap;transform:scaleX(0.84);transform-origin:0 0;">030</div>
<div style="position:absolute;left:141px;top:507.72px;font-size:12.5px;line-height:12.5px;color:#000;font-family:'Liberation Sans', sans-serif;white-space:nowrap;transform:scaleX(0.84);transform-origin:0 0;">Start construction</div>
<div style="position:absolute;left:707.5px;width:300px;text-align:center;top:507.72px;font-size:12.5px;line-height:12.5px;color:#767676;font-family:'Liberation Sans', sans-serif;white-space:nowrap;transform:scaleX(0.84);transform-origin:50% 0;">Yes</div>
<div style="position:absolute;left:758.5px;width:300px;text-align:center;top:507.72px;font-size:12.5px;line-height:12.5px;color:#767676;font-family:'Liberation Sans', sans-serif;white-space:nowrap;transform:scaleX(0.84);transform-origin:50% 0;">1</div>
<div style="position:absolute;left:809.5px;width:300px;text-align:center;top:507.72px;font-size:12.5px;line-height:12.5px;color:#767676;font-family:'Liberation Sans', sans-serif;white-space:nowrap;transform:scaleX(0.84);transform-origin:50% 0;">13</div>
<div style="position:absolute;left:873px;width:300px;text-align:center;top:507.72px;font-size:12.5px;line-height:12.5px;color:#767676;font-family:'Liberation Sans', sans-serif;white-space:nowrap;transform:scaleX(0.84);transform-origin:50% 0;">09.Jun.2020</div>
<div style="position:absolute;left:948.5px;width:300px;text-align:center;top:507.72px;font-size:12.5px;line-height:12.5px;color:#767676;font-family:'Liberation Sans', sans-serif;white-space:nowrap;transform:scaleX(0.84);transform-origin:50% 0;">09.Jun.2020</div>
<div style="position:absolute;left:42px;top:526.72px;font-size:12.5px;line-height:12.5px;color:#000;font-family:'Liberation Sans', sans-serif;white-space:nowrap;transform:scaleX(0.84);transform-origin:0 0;">210</div>
<div style="position:absolute;left:141px;top:526.72px;font-size:12.5px;line-height:12.5px;color:#000;font-family:'Liberation Sans', sans-serif;white-space:nowrap;transform:scaleX(0.84);transform-origin:0 0;">Tunnel tracks</div>
<div style="position:absolute;left:707.5px;width:300px;text-align:center;top:526.72px;font-size:12.5px;line-height:12.5px;color:#767676;font-family:'Liberation Sans', sans-serif;white-space:nowrap;transform:scaleX(0.84);transform-origin:50% 0;">Yes</div>
<div style="position:absolute;left:758.5px;width:300px;text-align:center;top:526.72px;font-size:12.5px;line-height:12.5px;color:#767676;font-family:'Liberation Sans', sans-serif;white-space:nowrap;transform:scaleX(0.84);transform-origin:50% 0;">1</div>
<div style="position:absolute;left:809.5px;width:300px;text-align:center;top:526.72px;font-size:12.5px;line-height:12.5px;color:#767676;font-family:'Liberation Sans', sans-serif;white-space:nowrap;transform:scaleX(0.84);transform-origin:50% 0;">14</div>
<div style="position:absolute;left:873px;width:300px;text-align:center;top:526.72px;font-size:12.5px;line-height:12.5px;color:#767676;font-family:'Liberation Sans', sans-serif;white-space:nowrap;transform:scaleX(0.84);transform-origin:50% 0;">09.Jun.2020</div>
<div style="position:absolute;left:948.5px;width:300px;text-align:center;top:526.72px;font-size:12.5px;line-height:12.5px;color:#767676;font-family:'Liberation Sans', sans-serif;white-space:nowrap;transform:scaleX(0.84);transform-origin:50% 0;">16.Oct.2020</div>
<div style="position:absolute;left:42px;top:545.72px;font-size:12.5px;line-height:12.5px;color:#000;font-family:'Liberation Sans', sans-serif;white-space:nowrap;transform:scaleX(0.84);transform-origin:0 0;">330</div>
<div style="position:absolute;left:141px;top:545.72px;font-size:12.5px;line-height:12.5px;color:#000;font-family:'Liberation Sans', sans-serif;white-space:nowrap;transform:scaleX(0.84);transform-origin:0 0;">Light Fixtures</div>
<div style="position:absolute;left:707.5px;width:300px;text-align:center;top:545.72px;font-size:12.5px;line-height:12.5px;color:#767676;font-family:'Liberation Sans', sans-serif;white-space:nowrap;transform:scaleX(0.84);transform-origin:50% 0;">Yes</div>
<div style="position:absolute;left:758.5px;width:300px;text-align:center;top:545.72px;font-size:12.5px;line-height:12.5px;color:#767676;font-family:'Liberation Sans', sans-serif;white-space:nowrap;transform:scaleX(0.84);transform-origin:50% 0;">1</div>
<div style="position:absolute;left:809.5px;width:300px;text-align:center;top:545.72px;font-size:12.5px;line-height:12.5px;color:#767676;font-family:'Liberation Sans', sans-serif;white-space:nowrap;transform:scaleX(0.84);transform-origin:50% 0;">15</div>
<div style="position:absolute;left:873px;width:300px;text-align:center;top:545.72px;font-size:12.5px;line-height:12.5px;color:#767676;font-family:'Liberation Sans', sans-serif;white-space:nowrap;transform:scaleX(0.84);transform-origin:50% 0;">17.Oct.2020</div>
<div style="position:absolute;left:948.5px;width:300px;text-align:center;top:545.72px;font-size:12.5px;line-height:12.5px;color:#767676;font-family:'Liberation Sans', sans-serif;white-space:nowrap;transform:scaleX(0.84);transform-origin:50% 0;">26.Oct.2020</div>
<div style="position:absolute;left:42px;top:564.72px;font-size:12.5px;line-height:12.5px;color:#000;font-family:'Liberation Sans', sans-serif;white-space:nowrap;transform:scaleX(0.84);transform-origin:0 0;">340</div>
<div style="position:absolute;left:141px;top:564.72px;font-size:12.5px;line-height:12.5px;color:#000;font-family:'Liberation Sans', sans-serif;white-space:nowrap;transform:scaleX(0.84);transform-origin:0 0;">Ventilation</div>
<div style="position:absolute;left:707.5px;width:300px;text-align:center;top:564.72px;font-size:12.5px;line-height:12.5px;color:#767676;font-family:'Liberation Sans', sans-serif;white-space:nowrap;transform:scaleX(0.84);transform-origin:50% 0;">Yes</div>
<div style="position:absolute;left:758.5px;width:300px;text-align:center;top:564.72px;font-size:12.5px;line-height:12.5px;color:#767676;font-family:'Liberation Sans', sans-serif;white-space:nowrap;transform:scaleX(0.84);transform-origin:50% 0;">1</div>
<div style="position:absolute;left:809.5px;width:300px;text-align:center;top:564.72px;font-size:12.5px;line-height:12.5px;color:#767676;font-family:'Liberation Sans', sans-serif;white-space:nowrap;transform:scaleX(0.84);transform-origin:50% 0;">16</div>
<div style="position:absolute;left:873px;width:300px;text-align:center;top:564.72px;font-size:12.5px;line-height:12.5px;color:#767676;font-family:'Liberation Sans', sans-serif;white-space:nowrap;transform:scaleX(0.84);transform-origin:50% 0;">27.Oct.2020</div>
<div style="position:absolute;left:948.5px;width:300px;text-align:center;top:564.72px;font-size:12.5px;line-height:12.5px;color:#767676;font-family:'Liberation Sans', sans-serif;white-space:nowrap;transform:scaleX(0.84);transform-origin:50% 0;">07.Nov.2020</div>
<div style="position:absolute;left:42px;top:583.72px;font-size:12.5px;line-height:12.5px;color:#000;font-family:'Liberation Sans', sans-serif;white-space:nowrap;transform:scaleX(0.84);transform-origin:0 0;">350</div>
<div style="position:absolute;left:141px;top:583.72px;font-size:12.5px;line-height:12.5px;color:#000;font-family:'Liberation Sans', sans-serif;white-space:nowrap;transform:scaleX(0.84);transform-origin:0 0;">Emergency alert system</div>
<div style="position:absolute;left:707.5px;width:300px;text-align:center;top:583.72px;font-size:12.5px;line-height:12.5px;color:#767676;font-family:'Liberation Sans', sans-serif;white-space:nowrap;transform:scaleX(0.84);transform-origin:50% 0;">Yes</div>
<div style="position:absolute;left:758.5px;width:300px;text-align:center;top:583.72px;font-size:12.5px;line-height:12.5px;color:#767676;font-family:'Liberation Sans', sans-serif;white-space:nowrap;transform:scaleX(0.84);transform-origin:50% 0;">1</div>
<div style="position:absolute;left:809.5px;width:300px;text-align:center;top:583.72px;font-size:12.5px;line-height:12.5px;color:#767676;font-family:'Liberation Sans', sans-serif;white-space:nowrap;transform:scaleX(0.84);transform-origin:50% 0;">17</div>
<div style="position:absolute;left:873px;width:300px;text-align:center;top:583.72px;font-size:12.5px;line-height:12.5px;color:#767676;font-family:'Liberation Sans', sans-serif;white-space:nowrap;transform:scaleX(0.84);transform-origin:50% 0;">08.Nov.2020</div>
<div style="position:absolute;left:948.5px;width:300px;text-align:center;top:583.72px;font-size:12.5px;line-height:12.5px;color:#767676;font-family:'Liberation Sans', sans-serif;white-space:nowrap;transform:scaleX(0.84);transform-origin:50% 0;">15.Nov.2020</div>
<div style="position:absolute;left:42px;top:602.72px;font-size:12.5px;line-height:12.5px;color:#000;font-family:'Liberation Sans', sans-serif;white-space:nowrap;transform:scaleX(0.84);transform-origin:0 0;">040</div>
<div style="position:absolute;left:141px;top:602.72px;font-size:12.5px;line-height:12.5px;color:#000;font-family:'Liberation Sans', sans-serif;white-space:nowrap;transform:scaleX(0.84);transform-origin:0 0;">Commissioning</div>
<div style="position:absolute;left:707.5px;width:300px;text-align:center;top:602.72px;font-size:12.5px;line-height:12.5px;color:#767676;font-family:'Liberation Sans', sans-serif;white-space:nowrap;transform:scaleX(0.84);transform-origin:50% 0;">Yes</div>
<div style="position:absolute;left:758.5px;width:300px;text-align:center;top:602.72px;font-size:12.5px;line-height:12.5px;color:#767676;font-family:'Liberation Sans', sans-serif;white-space:nowrap;transform:scaleX(0.84);transform-origin:50% 0;">1</div>
<div style="position:absolute;left:809.5px;width:300px;text-align:center;top:602.72px;font-size:12.5px;line-height:12.5px;color:#767676;font-family:'Liberation Sans', sans-serif;white-space:nowrap;transform:scaleX(0.84);transform-origin:50% 0;">18</div>
<div style="position:absolute;left:873px;width:300px;text-align:center;top:602.72px;font-size:12.5px;line-height:12.5px;color:#767676;font-family:'Liberation Sans', sans-serif;white-space:nowrap;transform:scaleX(0.84);transform-origin:50% 0;">17.Nov.2020</div>
<div style="position:absolute;left:948.5px;width:300px;text-align:center;top:602.72px;font-size:12.5px;line-height:12.5px;color:#767676;font-family:'Liberation Sans', sans-serif;white-space:nowrap;transform:scaleX(0.84);transform-origin:50% 0;">17.Nov.2020</div>
<div style="position:absolute;left:42px;top:621.72px;font-size:12.5px;line-height:12.5px;color:#000;font-family:'Liberation Sans', sans-serif;white-space:nowrap;transform:scaleX(0.84);transform-origin:0 0;">230</div>
<div style="position:absolute;left:141px;top:621.72px;font-size:12.5px;line-height:12.5px;color:#000;font-family:'Liberation Sans', sans-serif;white-space:nowrap;transform:scaleX(0.84);transform-origin:0 0;">Electrical testing</div>
<div style="position:absolute;left:707.5px;width:300px;text-align:center;top:621.72px;font-size:12.5px;line-height:12.5px;color:#767676;font-family:'Liberation Sans', sans-serif;white-space:nowrap;transform:scaleX(0.84);transform-origin:50% 0;">Yes</div>
<div style="position:absolute;left:758.5px;width:300px;text-align:center;top:621.72px;font-size:12.5px;line-height:12.5px;color:#767676;font-family:'Liberation Sans', sans-serif;white-space:nowrap;transform:scaleX(0.84);transform-origin:50% 0;">1</div>
<div style="position:absolute;left:809.5px;width:300px;text-align:center;top:621.72px;font-size:12.5px;line-height:12.5px;color:#767676;font-family:'Liberation Sans', sans-serif;white-space:nowrap;transform:scaleX(0.84);transform-origin:50% 0;">19</div>
<div style="position:absolute;left:873px;width:300px;text-align:center;top:621.72px;font-size:12.5px;line-height:12.5px;color:#767676;font-family:'Liberation Sans', sans-serif;white-space:nowrap;transform:scaleX(0.84);transform-origin:50% 0;">17.Nov.2020</div>
<div style="position:absolute;left:948.5px;width:300px;text-align:center;top:621.72px;font-size:12.5px;line-height:12.5px;color:#767676;font-family:'Liberation Sans', sans-serif;white-space:nowrap;transform:scaleX(0.84);transform-origin:50% 0;">08.Jan.2021</div>
<div style="position:absolute;left:42px;top:640.72px;font-size:12.5px;line-height:12.5px;color:#000;font-family:'Liberation Sans', sans-serif;white-space:nowrap;transform:scaleX(0.84);transform-origin:0 0;">240</div>
<div style="position:absolute;left:141px;top:640.72px;font-size:12.5px;line-height:12.5px;color:#000;font-family:'Liberation Sans', sans-serif;white-space:nowrap;transform:scaleX(0.84);transform-origin:0 0;">Structural testing</div>
<div style="position:absolute;left:707.5px;width:300px;text-align:center;top:640.72px;font-size:12.5px;line-height:12.5px;color:#767676;font-family:'Liberation Sans', sans-serif;white-space:nowrap;transform:scaleX(0.84);transform-origin:50% 0;">Yes</div>
<div style="position:absolute;left:758.5px;width:300px;text-align:center;top:640.72px;font-size:12.5px;line-height:12.5px;color:#767676;font-family:'Liberation Sans', sans-serif;white-space:nowrap;transform:scaleX(0.84);transform-origin:50% 0;">1</div>
<div style="position:absolute;left:809.5px;width:300px;text-align:center;top:640.72px;font-size:12.5px;line-height:12.5px;color:#767676;font-family:'Liberation Sans', sans-serif;white-space:nowrap;transform:scaleX(0.84);transform-origin:50% 0;">20</div>
<div style="position:absolute;left:873px;width:300px;text-align:center;top:640.72px;font-size:12.5px;line-height:12.5px;color:#767676;font-family:'Liberation Sans', sans-serif;white-space:nowrap;transform:scaleX(0.84);transform-origin:50% 0;">21.Dec.2020</div>
<div style="position:absolute;left:948.5px;width:300px;text-align:center;top:640.72px;font-size:12.5px;line-height:12.5px;color:#767676;font-family:'Liberation Sans', sans-serif;white-space:nowrap;transform:scaleX(0.84);transform-origin:50% 0;">14.Feb.2021</div>
<div style="position:absolute;left:42px;top:659.72px;font-size:12.5px;line-height:12.5px;color:#000;font-family:'Liberation Sans', sans-serif;white-space:nowrap;transform:scaleX(0.84);transform-origin:0 0;">320</div>
<div style="position:absolute;left:141px;top:659.72px;font-size:12.5px;line-height:12.5px;color:#000;font-family:'Liberation Sans', sans-serif;white-space:nowrap;transform:scaleX(0.84);transform-origin:0 0;">Project Completion/Tunnel Opening</div>
<div style="position:absolute;left:707.5px;width:300px;text-align:center;top:659.72px;font-size:12.5px;line-height:12.5px;color:#767676;font-family:'Liberation Sans', sans-serif;white-space:nowrap;transform:scaleX(0.84);transform-origin:50% 0;">Yes</div>
<div style="position:absolute;left:758.5px;width:300px;text-align:center;top:659.72px;font-size:12.5px;line-height:12.5px;color:#767676;font-family:'Liberation Sans', sans-serif;white-space:nowrap;transform:scaleX(0.84);transform-origin:50% 0;">1</div>
<div style="position:absolute;left:809.5px;width:300px;text-align:center;top:659.72px;font-size:12.5px;line-height:12.5px;color:#767676;font-family:'Liberation Sans', sans-serif;white-space:nowrap;transform:scaleX(0.84);transform-origin:50% 0;">21</div>
<div style="position:absolute;left:873px;width:300px;text-align:center;top:659.72px;font-size:12.5px;line-height:12.5px;color:#767676;font-family:'Liberation Sans', sans-serif;white-space:nowrap;transform:scaleX(0.84);transform-origin:50% 0;">14.Feb.2021</div>
<div style="position:absolute;left:948.5px;width:300px;text-align:center;top:659.72px;font-size:12.5px;line-height:12.5px;color:#767676;font-family:'Liberation Sans', sans-serif;white-space:nowrap;transform:scaleX(0.84);transform-origin:50% 0;">14.Feb.2021</div>
<div style="position:absolute;left:16px;top:682px;width:7px;height:7px;border:1px solid #8c8577;background:#fff"></div>
<div style="position:absolute;left:18px;top:686px;width:5px;height:1px;background:#000;"></div>
<div style="position:absolute;left:32.5px;top:678.72px;font-size:12.5px;line-height:12.5px;color:#fff;font-family:'Liberation Sans', sans-serif;white-space:nowrap;transform:scaleX(0.84);transform-origin:0 0;">Float Path 2</div>
<div style="position:absolute;left:141px;top:678.72px;font-size:12.5px;line-height:12.5px;color:#fff;font-family:'Liberation Sans', sans-serif;white-space:nowrap;transform:scaleX(0.84);transform-origin:0 0;">Float Path 2</div>
<div style="position:absolute;left:873px;width:300px;text-align:center;top:678.72px;font-size:12.5px;line-height:12.5px;color:#fff;font-family:'Liberation Sans', sans-serif;white-space:nowrap;transform:scaleX(0.84);transform-origin:50% 0;">27.Feb.2019</div>
<div style="position:absolute;left:948.5px;width:300px;text-align:center;top:678.72px;font-size:12.5px;line-height:12.5px;color:#fff;font-family:'Liberation Sans', sans-serif;white-space:nowrap;transform:scaleX(0.84);transform-origin:50% 0;">28.Mar.2019</div>
<div style="position:absolute;left:42px;top:697.72px;font-size:12.5px;line-height:12.5px;color:#000;font-family:'Liberation Sans', sans-serif;white-space:nowrap;transform:scaleX(0.84);transform-origin:0 0;">101</div>
<div style="position:absolute;left:141px;top:697.72px;font-size:12.5px;line-height:12.5px;color:#000;font-family:'Liberation Sans', sans-serif;white-space:nowrap;transform:scaleX(0.84);transform-origin:0 0;"></div>
<div style="position:absolute;left:707.5px;width:300px;text-align:center;top:697.72px;font-size:12.5px;line-height:12.5px;color:#767676;font-family:'Liberation Sans', sans-serif;white-space:nowrap;transform:scaleX(0.84);transform-origin:50% 0;">Yes</div>
<div style="position:absolute;left:758.5px;width:300px;text-align:center;top:697.72px;font-size:12.5px;line-height:12.5px;color:#767676;font-family:'Liberation Sans', sans-serif;white-space:nowrap;transform:scaleX(0.84);transform-origin:50% 0;">2</div>
<div style="position:absolute;left:809.5px;width:300px;text-align:center;top:697.72px;font-size:12.5px;line-height:12.5px;color:#767676;font-family:'Liberation Sans', sans-serif;white-space:nowrap;transform:scaleX(0.84);transform-origin:50% 0;">1</div>
<div style="position:absolute;left:873px;width:300px;text-align:center;top:697.72px;font-size:12.5px;line-height:12.5px;color:#767676;font-family:'Liberation Sans', sans-serif;white-space:nowrap;transform:scaleX(0.84);transform-origin:50% 0;">27.Feb.2019</div>
<div style="position:absolute;left:948.5px;width:300px;text-align:center;top:697.72px;font-size:12.5px;line-height:12.5px;color:#767676;font-family:'Liberation Sans', sans-serif;white-space:nowrap;transform:scaleX(0.84);transform-origin:50% 0;">28.Mar.2019</div>
<div style="position:absolute;left:16px;top:720px;width:7px;height:7px;border:1px solid #8c8577;background:#fff"></div>
<div style="position:absolute;left:18px;top:724px;width:5px;height:1px;background:#000;"></div>
<div style="position:absolute;left:32.5px;top:716.72px;font-size:12.5px;line-height:12.5px;color:#fff;font-family:'Liberation Sans', sans-serif;white-space:nowrap;transform:scaleX(0.84);transform-origin:0 0;">Float Path 3</div>
<div style="position:absolute;left:141px;top:716.72px;font-size:12.5px;line-height:12.5px;color:#fff;font-family:'Liberation Sans', sans-serif;white-space:nowrap;transform:scaleX(0.84);transform-origin:0 0;">Float Path 3</div>
<div style="position:absolute;left:873px;width:300px;text-align:center;top:716.72px;font-size:12.5px;line-height:12.5px;color:#fff;font-family:'Liberation Sans', sans-serif;white-space:nowrap;transform:scaleX(0.84);transform-origin:50% 0;">30.Sep.2019</div>
<div style="position:absolute;left:948.5px;width:300px;text-align:center;top:716.72px;font-size:12.5px;line-height:12.5px;color:#fff;font-family:'Liberation Sans', sans-serif;white-space:nowrap;transform:scaleX(0.84);transform-origin:50% 0;">08.Jun.2020</div>
<div style="position:absolute;left:42px;top:735.72px;font-size:12.5px;line-height:12.5px;color:#000;font-family:'Liberation Sans', sans-serif;white-space:nowrap;transform:scaleX(0.84);transform-origin:0 0;">190</div>
<div style="position:absolute;left:141px;top:735.72px;font-size:12.5px;line-height:12.5px;color:#000;font-family:'Liberation Sans', sans-serif;white-space:nowrap;transform:scaleX(0.84);transform-origin:0 0;">Muck and Hull</div>
<div style="position:absolute;left:707.5px;width:300px;text-align:center;top:735.72px;font-size:12.5px;line-height:12.5px;color:#767676;font-family:'Liberation Sans', sans-serif;white-space:nowrap;transform:scaleX(0.84);transform-origin:50% 0;">Yes</div>
<div style="position:absolute;left:758.5px;width:300px;text-align:center;top:735.72px;font-size:12.5px;line-height:12.5px;color:#767676;font-family:'Liberation Sans', sans-serif;white-space:nowrap;transform:scaleX(0.84);transform-origin:50% 0;">3</div>
<div style="position:absolute;left:809.5px;width:300px;text-align:center;top:735.72px;font-size:12.5px;line-height:12.5px;color:#767676;font-family:'Liberation Sans', sans-serif;white-space:nowrap;transform:scaleX(0.84);transform-origin:50% 0;">1</div>
<div style="position:absolute;left:873px;width:300px;text-align:center;top:735.72px;font-size:12.5px;line-height:12.5px;color:#767676;font-family:'Liberation Sans', sans-serif;white-space:nowrap;transform:scaleX(0.84);transform-origin:50% 0;">30.Sep.2019</div>
<div style="position:absolute;left:948.5px;width:300px;text-align:center;top:735.72px;font-size:12.5px;line-height:12.5px;color:#767676;font-family:'Liberation Sans', sans-serif;white-space:nowrap;transform:scaleX(0.84);transform-origin:50% 0;">08.Jun.2020</div>
<div style="position:absolute;left:16px;top:758px;width:7px;height:7px;border:1px solid #8c8577;background:#fff"></div>
<div style="position:absolute;left:18px;top:762px;width:5px;height:1px;background:#000;"></div>
<div style="position:absolute;left:32.5px;top:754.72px;font-size:12.5px;line-height:12.5px;color:#fff;font-family:'Liberation Sans', sans-serif;white-space:nowrap;transform:scaleX(0.84);transform-origin:0 0;">Float Path 4</div>
<div style="position:absolute;left:141px;top:754.72px;font-size:12.5px;line-height:12.5px;color:#fff;font-family:'Liberation Sans', sans-serif;white-space:nowrap;transform:scaleX(0.84);transform-origin:0 0;">Float Path 4</div>
<div style="position:absolute;left:873px;width:300px;text-align:center;top:754.72px;font-size:12.5px;line-height:12.5px;color:#fff;font-family:'Liberation Sans', sans-serif;white-space:nowrap;transform:scaleX(0.84);transform-origin:50% 0;">30.Sep.2019</div>
<div style="position:absolute;left:948.5px;width:300px;text-align:center;top:754.72px;font-size:12.5px;line-height:12.5px;color:#fff;font-family:'Liberation Sans', sans-serif;white-space:nowrap;transform:scaleX(0.84);transform-origin:50% 0;">08.Jun.2020</div>
<div style="position:absolute;left:42px;top:773.72px;font-size:12.5px;line-height:12.5px;color:#000;font-family:'Liberation Sans', sans-serif;white-space:nowrap;transform:scaleX(0.84);transform-origin:0 0;">200</div>
<div style="position:absolute;left:141px;top:773.72px;font-size:12.5px;line-height:12.5px;color:#000;font-family:'Liberation Sans', sans-serif;white-space:nowrap;transform:scaleX(0.84);transform-origin:0 0;">Support and dewater tunnel</div>
<div style="position:absolute;left:707.5px;width:300px;text-align:center;top:773.72px;font-size:12.5px;line-height:12.5px;color:#767676;font-family:'Liberation Sans', sans-serif;white-space:nowrap;transform:scaleX(0.84);transform-origin:50% 0;">Yes</div>
<div style="position:absolute;left:758.5px;width:300px;text-align:center;top:773.72px;font-size:12.5px;line-height:12.5px;color:#767676;font-family:'Liberation Sans', sans-serif;white-space:nowrap;transform:scaleX(0.84);transform-origin:50% 0;">4</div>
<div style="position:absolute;left:809.5px;width:300px;text-align:center;top:773.72px;font-size:12.5px;line-height:12.5px;color:#767676;font-family:'Liberation Sans', sans-serif;white-space:nowrap;transform:scaleX(0.84);transform-origin:50% 0;">1</div>
<div style="position:absolute;left:873px;width:300px;text-align:center;top:773.72px;font-size:12.5px;line-height:12.5px;color:#767676;font-family:'Liberation Sans', sans-serif;white-space:nowrap;transform:scaleX(0.84);transform-origin:50% 0;">30.Sep.2019</div>
<div style="position:absolute;left:948.5px;width:300px;text-align:center;top:773.72px;font-size:12.5px;line-height:12.5px;color:#767676;font-family:'Liberation Sans', sans-serif;white-space:nowrap;transform:scaleX(0.84);transform-origin:50% 0;">08.Jun.2020</div>
<div style="position:absolute;left:16px;top:796px;width:7px;height:7px;border:1px solid #8c8577;background:#fff"></div>
<div style="position:absolute;left:18px;top:800px;width:5px;height:1px;background:#000;"></div>
<div style="position:absolute;left:32.5px;top:792.72px;font-size:12.5px;line-height:12.5px;color:#fff;font-family:'Liberation Sans', sans-serif;white-space:nowrap;transform:scaleX(0.84);transform-origin:0 0;">Float Path 5</div>
<div style="position:absolute;left:141px;top:792.72px;font-size:12.5px;line-height:12.5px;color:#fff;font-family:'Liberation Sans', sans-serif;white-space:nowrap;transform:scaleX(0.84);transform-origin:0 0;">Float Path 5</div>
<div style="position:absolute;left:873px;width:300px;text-align:center;top:792.72px;font-size:12.5px;line-height:12.5px;color:#fff;font-family:'Liberation Sans', sans-serif;white-space:nowrap;transform:scaleX(0.84);transform-origin:50% 0;">22.Jul.2019</div>
<div style="position:absolute;left:948.5px;width:300px;text-align:center;top:792.72px;font-size:12.5px;line-height:12.5px;color:#fff;font-family:'Liberation Sans', sans-serif;white-space:nowrap;transform:scaleX(0.84);transform-origin:50% 0;">22.Oct.2019</div>
<div style="position:absolute;left:42px;top:811.72px;font-size:12.5px;line-height:12.5px;color:#000;font-family:'Liberation Sans', sans-serif;white-space:nowrap;transform:scaleX(0.84);transform-origin:0 0;">150</div>
<div style="position:absolute;left:141px;top:811.72px;font-size:12.5px;line-height:12.5px;color:#000;font-family:'Liberation Sans', sans-serif;white-space:nowrap;transform:scaleX(0.84);transform-origin:0 0;">Unit construction phase 2</div>
<div style="position:absolute;left:707.5px;width:300px;text-align:center;top:811.72px;font-size:12.5px;line-height:12.5px;color:#767676;font-family:'Liberation Sans', sans-serif;white-space:nowrap;transform:scaleX(0.84);transform-origin:50% 0;">No</div>
<div style="position:absolute;left:758.5px;width:300px;text-align:center;top:811.72px;font-size:12.5px;line-height:12.5px;color:#767676;font-family:'Liberation Sans', sans-serif;white-space:nowrap;transform:scaleX(0.84);transform-origin:50% 0;">5</div>
<div style="position:absolute;left:809.5px;width:300px;text-align:center;top:811.72px;font-size:12.5px;line-height:12.5px;color:#767676;font-family:'Liberation Sans', sans-serif;white-space:nowrap;transform:scaleX(0.84);transform-origin:50% 0;">1</div>
<div style="position:absolute;left:873px;width:300px;text-align:center;top:811.72px;font-size:12.5px;line-height:12.5px;color:#767676;font-family:'Liberation Sans', sans-serif;white-space:nowrap;transform:scaleX(0.84);transform-origin:50% 0;">22.Jul.2019</div>
<div style="position:absolute;left:948.5px;width:300px;text-align:center;top:811.72px;font-size:12.5px;line-height:12.5px;color:#767676;font-family:'Liberation Sans', sans-serif;white-space:nowrap;transform:scaleX(0.84);transform-origin:50% 0;">22.Oct.2019</div>
<div style="position:absolute;left:16px;top:834px;width:7px;height:7px;border:1px solid #8c8577;background:#fff"></div>
<div style="position:absolute;left:18px;top:838px;width:5px;height:1px;background:#000;"></div>
<div style="position:absolute;left:32.5px;top:830.72px;font-size:12.5px;line-height:12.5px;color:#fff;font-family:'Liberation Sans', sans-serif;white-space:nowrap;transform:scaleX(0.84);transform-origin:0 0;">Float Path 6</div>
<div style="position:absolute;left:141px;top:830.72px;font-size:12.5px;line-height:12.5px;color:#fff;font-family:'Liberation Sans', sans-serif;white-space:nowrap;transform:scaleX(0.84);transform-origin:0 0;">Float Path 6</div>
<div style="position:absolute;left:873px;width:300px;text-align:center;top:830.72px;font-size:12.5px;line-height:12.5px;color:#fff;font-family:'Liberation Sans', sans-serif;white-space:nowrap;transform:scaleX(0.84);transform-origin:50% 0;">27.Sep.2019</div>
<div style="position:absolute;left:948.5px;width:300px;text-align:center;top:830.72px;font-size:12.5px;line-height:12.5px;color:#fff;font-family:'Liberation Sans', sans-serif;white-space:nowrap;transform:scaleX(0.84);transform-origin:50% 0;">05.Jun.2020</div>
<div style="position:absolute;left:42px;top:849.72px;font-size:12.5px;line-height:12.5px;color:#000;font-family:'Liberation Sans', sans-serif;white-space:nowrap;transform:scaleX(0.84);transform-origin:0 0;">180</div>
<div style="position:absolute;left:141px;top:849.72px;font-size:12.5px;line-height:12.5px;color:#000;font-family:'Liberation Sans', sans-serif;white-space:nowrap;transform:scaleX(0.84);transform-origin:0 0;">Load explosives and blast</div>
<div style="position:absolute;left:707.5px;width:300px;text-align:center;top:849.72px;font-size:12.5px;line-height:12.5px;color:#767676;font-family:'Liberation Sans', sans-serif;white-space:nowrap;transform:scaleX(0.84);transform-origin:50% 0;">No</div>
<div style="position:absolute;left:758.5px;width:300px;text-align:center;top:849.72px;font-size:12.5px;line-height:12.5px;color:#767676;font-family:'Liberation Sans', sans-serif;white-space:nowrap;transform:scaleX(0.84);transform-origin:50% 0;">6</div>
<div style="position:absolute;left:809.5px;width:300px;text-align:center;top:849.72px;font-size:12.5px;line-height:12.5px;color:#767676;font-family:'Liberation Sans', sans-serif;white-space:nowrap;transform:scaleX(0.84);transform-origin:50% 0;">1</div>
<div style="position:absolute;left:873px;width:300px;text-align:center;top:849.72px;font-size:12.5px;line-height:12.5px;color:#767676;font-family:'Liberation Sans', sans-serif;white-space:nowrap;transform:scaleX(0.84);transform-origin:50% 0;">27.Sep.2019</div>
<div style="position:absolute;left:948.5px;width:300px;text-align:center;top:849.72px;font-size:12.5px;line-height:12.5px;color:#767676;font-family:'Liberation Sans', sans-serif;white-space:nowrap;transform:scaleX(0.84);transform-origin:50% 0;">05.Jun.2020</div>
<div style="position:absolute;left:16px;top:872px;width:7px;height:7px;border:1px solid #8c8577;background:#fff"></div>
<div style="position:absolute;left:18px;top:876px;width:5px;height:1px;background:#000;"></div>
<div style="position:absolute;left:32.5px;top:868.72px;font-size:12.5px;line-height:12.5px;color:#fff;font-family:'Liberation Sans', sans-serif;white-space:nowrap;transform:scaleX(0.84);transform-origin:0 0;">Float Path 7</div>
<div style="position:absolute;left:141px;top:868.72px;font-size:12.5px;line-height:12.5px;color:#fff;font-family:'Liberation Sans', sans-serif;white-space:nowrap;transform:scaleX(0.84);transform-origin:0 0;">Float Path 7</div>
<div style="position:absolute;left:873px;width:300px;text-align:center;top:868.72px;font-size:12.5px;line-height:12.5px;color:#fff;font-family:'Liberation Sans', sans-serif;white-space:nowrap;transform:scaleX(0.84);transform-origin:50% 0;">26.Sep.2019</div>
<div style="position:absolute;left:948.5px;width:300px;text-align:center;top:868.72px;font-size:12.5px;line-height:12.5px;color:#fff;font-family:'Liberation Sans', sans-serif;white-space:nowrap;transform:scaleX(0.84);transform-origin:50% 0;">04.Jun.2020</div>
<div style="position:absolute;left:42px;top:887.72px;font-size:12.5px;line-height:12.5px;color:#000;font-family:'Liberation Sans', sans-serif;white-space:nowrap;transform:scaleX(0.84);transform-origin:0 0;">170</div>
<div style="position:absolute;left:141px;top:887.72px;font-size:12.5px;line-height:12.5px;color:#000;font-family:'Liberation Sans', sans-serif;white-space:nowrap;transform:scaleX(0.84);transform-origin:0 0;">Drilling shot holes</div>
<div style="position:absolute;left:707.5px;width:300px;text-align:center;top:887.72px;font-size:12.5px;line-height:12.5px;color:#767676;font-family:'Liberation Sans', sans-serif;white-space:nowrap;transform:scaleX(0.84);transform-origin:50% 0;">No</div>
<div style="position:absolute;left:758.5px;width:300px;text-align:center;top:887.72px;font-size:12.5px;line-height:12.5px;color:#767676;font-family:'Liberation Sans', sans-serif;white-space:nowrap;transform:scaleX(0.84);transform-origin:50% 0;">7</div>
<div style="position:absolute;left:809.5px;width:300px;text-align:center;top:887.72px;font-size:12.5px;line-height:12.5px;color:#767676;font-family:'Liberation Sans', sans-serif;white-space:nowrap;transform:scaleX(0.84);transform-origin:50% 0;">1</div>
<div style="position:absolute;left:873px;width:300px;text-align:center;top:887.72px;font-size:12.5px;line-height:12.5px;color:#767676;font-family:'Liberation Sans', sans-serif;white-space:nowrap;transform:scaleX(0.84);transform-origin:50% 0;">26.Sep.2019</div>
<div style="position:absolute;left:948.5px;width:300px;text-align:center;top:887.72px;font-size:12.5px;line-height:12.5px;color:#767676;font-family:'Liberation Sans', sans-serif;white-space:nowrap;transform:scaleX(0.84);transform-origin:50% 0;">04.Jun.2020</div>
<div style="position:absolute;left:16px;top:910px;width:7px;height:7px;border:1px solid #8c8577;background:#fff"></div>
<div style="position:absolute;left:18px;top:914px;width:5px;height:1px;background:#000;"></div>
<div style="position:absolute;left:32.5px;top:906.72px;font-size:12.5px;line-height:12.5px;color:#fff;font-family:'Liberation Sans', sans-serif;white-space:nowrap;transform:scaleX(0.84);transform-origin:0 0;">Float Path 8</div>
<div style="position:absolute;left:141px;top:906.72px;font-size:12.5px;line-height:12.5px;color:#fff;font-family:'Liberation Sans', sans-serif;white-space:nowrap;transform:scaleX(0.84);transform-origin:0 0;">Float Path 8</div>
<div style="position:absolute;left:873px;width:300px;text-align:center;top:906.72px;font-size:12.5px;line-height:12.5px;color:#fff;font-family:'Liberation Sans', sans-serif;white-space:nowrap;transform:scaleX(0.84);transform-origin:50% 0;">08.Nov.2020</div>
<div style="position:absolute;left:948.5px;width:300px;text-align:center;top:906.72px;font-size:12.5px;line-height:12.5px;color:#fff;font-family:'Liberation Sans', sans-serif;white-space:nowrap;transform:scaleX(0.84);transform-origin:50% 0;">10.Nov.2020</div>
<div style="position:absolute;left:42px;top:925.72px;font-size:12.5px;line-height:12.5px;color:#000;font-family:'Liberation Sans', sans-serif;white-space:nowrap;transform:scaleX(0.84);transform-origin:0 0;">360</div>
<div style="position:absolute;left:141px;top:925.72px;font-size:12.5px;line-height:12.5px;color:#000;font-family:'Liberation Sans', sans-serif;white-space:nowrap;transform:scaleX(0.84);transform-origin:0 0;">Signs</div>
<div style="position:absolute;left:707.5px;width:300px;text-align:center;top:925.72px;font-size:12.5px;line-height:12.5px;color:#767676;font-family:'Liberation Sans', sans-serif;white-space:nowrap;transform:scaleX(0.84);transform-origin:50% 0;">No</div>
<div style="position:absolute;left:758.5px;width:300px;text-align:center;top:925.72px;font-size:12.5px;line-height:12.5px;color:#767676;font-family:'Liberation Sans', sans-serif;white-space:nowrap;transform:scaleX(0.84);transform-origin:50% 0;">8</div>
<div style="position:absolute;left:809.5px;width:300px;text-align:center;top:925.72px;font-size:12.5px;line-height:12.5px;color:#767676;font-family:'Liberation Sans', sans-serif;white-space:nowrap;transform:scaleX(0.84);transform-origin:50% 0;">1</div>
<div style="position:absolute;left:873px;width:300px;text-align:center;top:925.72px;font-size:12.5px;line-height:12.5px;color:#767676;font-family:'Liberation Sans', sans-serif;white-space:nowrap;transform:scaleX(0.84);transform-origin:50% 0;">08.Nov.2020</div>
<div style="position:absolute;left:948.5px;width:300px;text-align:center;top:925.72px;font-size:12.5px;line-height:12.5px;color:#767676;font-family:'Liberation Sans', sans-serif;white-space:nowrap;transform:scaleX(0.84);transform-origin:50% 0;">10.Nov.2020</div>
<div style="position:absolute;left:16px;top:948px;width:7px;height:7px;border:1px solid #8c8577;background:#fff"></div>
<div style="position:absolute;left:18px;top:952px;width:5px;height:1px;background:#000;"></div>
<div style="position:absolute;left:32.5px;top:944.72px;font-size:12.5px;line-height:12.5px;color:#fff;font-family:'Liberation Sans', sans-serif;white-space:nowrap;transform:scaleX(0.84);transform-origin:0 0;">Float Path 9</div>
<div style="position:absolute;left:141px;top:944.72px;font-size:12.5px;line-height:12.5px;color:#fff;font-family:'Liberation Sans', sans-serif;white-space:nowrap;transform:scaleX(0.84);transform-origin:0 0;">Float Path 9</div>
<div style="position:absolute;left:873px;width:300px;text-align:center;top:944.72px;font-size:12.5px;line-height:12.5px;color:#fff;font-family:'Liberation Sans', sans-serif;white-space:nowrap;transform:scaleX(0.84);transform-origin:50% 0;">08.Nov.2020</div>
<div style="position:absolute;left:948.5px;width:300px;text-align:center;top:944.72px;font-size:12.5px;line-height:12.5px;color:#fff;font-family:'Liberation Sans', sans-serif;white-space:nowrap;transform:scaleX(0.84);transform-origin:50% 0;">10.Nov.2020</div>
<div style="position:absolute;left:42px;top:963.72px;font-size:12.5px;line-height:12.5px;color:#000;font-family:'Liberation Sans', sans-serif;white-space:nowrap;transform:scaleX(0.84);transform-origin:0 0;">370</div>
<div style="position:absolute;left:141px;top:963.72px;font-size:12.5px;line-height:12.5px;color:#000;font-family:'Liberation Sans', sans-serif;white-space:nowrap;transform:scaleX(0.84);transform-origin:0 0;">Traffic cameras</div>
<div style="position:absolute;left:707.5px;width:300px;text-align:center;top:963.72px;font-size:12.5px;line-height:12.5px;color:#767676;font-family:'Liberation Sans', sans-serif;white-space:nowrap;transform:scaleX(0.84);transform-origin:50% 0;">No</div>
<div style="position:absolute;left:758.5px;width:300px;text-align:center;top:963.72px;font-size:12.5px;line-height:12.5px;color:#767676;font-family:'Liberation Sans', sans-serif;white-space:nowrap;transform:scaleX(0.84);transform-origin:50% 0;">9</div>
<div style="position:absolute;left:809.5px;width:300px;text-align:center;top:963.72px;font-size:12.5px;line-height:12.5px;color:#767676;font-family:'Liberation Sans', sans-serif;white-space:nowrap;transform:scaleX(0.84);transform-origin:50% 0;">1</div>
<div style="position:absolute;left:873px;width:300px;text-align:center;top:963.72px;font-size:12.5px;line-height:12.5px;color:#767676;font-family:'Liberation Sans', sans-serif;white-space:nowrap;transform:scaleX(0.84);transform-origin:50% 0;">08.Nov.2020</div>
<div style="position:absolute;left:948.5px;width:300px;text-align:center;top:963.72px;font-size:12.5px;line-height:12.5px;color:#767676;font-family:'Liberation Sans', sans-serif;white-space:nowrap;transform:scaleX(0.84);transform-origin:50% 0;">10.Nov.2020</div>
<div style="position:absolute;left:16px;top:986px;width:7px;height:7px;border:1px solid #8c8577;background:#fff"></div>
<div style="position:absolute;left:18px;top:990px;width:5px;height:1px;background:#000;"></div>
<div style="position:absolute;left:32.5px;top:982.72px;font-size:12.5px;line-height:12.5px;color:#fff;font-family:'Liberation Sans', sans-serif;white-space:nowrap;transform:scaleX(0.84);transform-origin:0 0;">Float Path 10</div>
<div style="position:absolute;left:141px;top:982.72px;font-size:12.5px;line-height:12.5px;color:#fff;font-family:'Liberation Sans', sans-serif;white-space:nowrap;transform:scaleX(0.84);transform-origin:0 0;">Float Path 10</div>
<div style="position:absolute;left:873px;width:300px;text-align:center;top:982.72px;font-size:12.5px;line-height:12.5px;color:#fff;font-family:'Liberation Sans', sans-serif;white-space:nowrap;transform:scaleX(0.84);transform-origin:50% 0;">24.Apr.2019</div>
<div style="position:absolute;left:948.5px;width:300px;text-align:center;top:982.72px;font-size:12.5px;line-height:12.5px;color:#fff;font-family:'Liberation Sans', sans-serif;white-space:nowrap;transform:scaleX(0.84);transform-origin:50% 0;">27.May.2019</div>
<div style="position:absolute;left:42px;top:1001.72px;font-size:12.5px;line-height:12.5px;color:#000;font-family:'Liberation Sans', sans-serif;white-space:nowrap;transform:scaleX(0.84);transform-origin:0 0;">120</div>
<div style="position:absolute;left:141px;top:1001.72px;font-size:12.5px;line-height:12.5px;color:#000;font-family:'Liberation Sans', sans-serif;white-space:nowrap;transform:scaleX(0.84);transform-origin:0 0;">Ventilation system design</div>
<div style="position:absolute;left:707.5px;width:300px;text-align:center;top:1001.72px;font-size:12.5px;line-height:12.5px;color:#767676;font-family:'Liberation Sans', sans-serif;white-space:nowrap;transform:scaleX(0.84);transform-origin:50% 0;">No</div>
<div style="position:absolute;left:758.5px;width:300px;text-align:center;top:1001.72px;font-size:12.5px;line-height:12.5px;color:#767676;font-family:'Liberation Sans', sans-serif;white-space:nowrap;transform:scaleX(0.84);transform-origin:50% 0;">10</div>
<div style="position:absolute;left:809.5px;width:300px;text-align:center;top:1001.72px;font-size:12.5px;line-height:12.5px;color:#767676;font-family:'Liberation Sans', sans-serif;white-space:nowrap;transform:scaleX(0.84);transform-origin:50% 0;">1</div>
<div style="position:absolute;left:873px;width:300px;text-align:center;top:1001.72px;font-size:12.5px;line-height:12.5px;color:#767676;font-family:'Liberation Sans', sans-serif;white-space:nowrap;transform:scaleX(0.84);transform-origin:50% 0;">24.Apr.2019</div>
<div style="position:absolute;left:948.5px;width:300px;text-align:center;top:1001.72px;font-size:12.5px;line-height:12.5px;color:#767676;font-family:'Liberation Sans', sans-serif;white-space:nowrap;transform:scaleX(0.84);transform-origin:50% 0;">27.May.2019</div>
<div style="position:absolute;left:1px;top:1015px;width:1135px;height:17px;background:#f0f0f0;"></div>
<div style="position:absolute;left:18px;top:1022px;width:17px;height:2px;background:#8a8a8a;"></div>
<div style="position:absolute;left:1136px;top:158px;width:6px;height:875px;background:#8c8c8c;"></div>
<div style="position:absolute;left:1140px;top:158px;width:1px;height:875px;background:#d4d4d4;"></div>
<div style="position:absolute;left:1141px;top:158px;width:1px;height:875px;background:#9a9a9a;"></div>
<svg width="1920" height="1080" style="left:0;top:0"><defs><linearGradient id="bar" x1="0" y1="0" x2="0" y2="1"><stop offset="0" stop-color="#d9d9d9"/><stop offset="0.3" stop-color="#fdfdfd"/><stop offset="1" stop-color="#a9a9a9"/></linearGradient><linearGradient id="cap" x1="0" y1="0" x2="0" y2="1"><stop offset="0" stop-color="#8a8a8a"/><stop offset="0.38" stop-color="#ffffff"/><stop offset="1" stop-color="#000"/></linearGradient><linearGradient id="sband" x1="0" y1="0" x2="0" y2="1"><stop offset="0" stop-color="#c8c8c8"/><stop offset="0.45" stop-color="#ffffff"/><stop offset="1" stop-color="#3a3a3a"/></linearGradient><linearGradient id="sbar" x1="0" y1="0" x2="0" y2="1"><stop offset="0" stop-color="#000"/><stop offset="0.3" stop-color="#fff"/><stop offset="0.65" stop-color="#000"/><stop offset="1" stop-color="#000"/></linearGradient><clipPath id="gclip"><rect x="1142" y="201" width="760" height="830"/></clipPath><clipPath id="hclip"><rect x="1142" y="158" width="776" height="43"/></clipPath></defs>
<rect x="1142" y="158" width="778" height="875" fill="#f0f0f0"/>
<rect x="1142" y="201" width="760" height="830" fill="#fff"/>
<g clip-path="url(#hclip)">
<rect x="1142" y="158" width="778" height="43" fill="#dedede"/>
<rect x="1142" y="158" width="778" height="1.2" fill="#000"/>
<rect x="1142" y="172" width="778" height="1" fill="#000"/>
<rect x="1142" y="186" width="778" height="1" fill="#000"/>
<rect x="1142" y="199" width="778" height="1" fill="#f4f4f4"/>
<rect x="1142" y="200" width="778" height="1" fill="#808080"/>
<rect x="1142" y="158" width="1.3" height="43" fill="#000"/>
<rect x="1918" y="158" width="1" height="43" fill="#000"/>
<rect x="1141" y="158" width="1" height="14" fill="#000"/>
<text transform="translate(1142.0 169.8) scale(0.86 1)" font-family="Liberation Sans" font-size="12.5" fill="#000">2</text>
<rect x="1150" y="158" width="1" height="14" fill="#000"/>
<text transform="translate(1151.0 169.8) scale(0.86 1)" font-family="Liberation Sans" font-size="12.5" fill="#000">2019</text>
<rect x="1496" y="158" width="1" height="14" fill="#000"/>
<text transform="translate(1497.0 169.8) scale(0.86 1)" font-family="Liberation Sans" font-size="12.5" fill="#000">2020</text>
<rect x="1844" y="158" width="1" height="14" fill="#000"/>
<text transform="translate(1845.0 169.8) scale(0.86 1)" font-family="Liberation Sans" font-size="12.5" fill="#000">2021</text>
<text transform="translate(1143.0 183.8) scale(0.86 1)" font-family="Liberation Sans" font-size="12.5" fill="#000">D</text>
<rect x="1150" y="172" width="1" height="14" fill="#000"/>
<text transform="translate(1151.0 183.8) scale(0.86 1)" font-family="Liberation Sans" font-size="12.5" fill="#000">Jan</text>
<rect x="1179" y="172" width="1" height="14" fill="#000"/>
<text transform="translate(1180.0 183.8) scale(0.86 1)" font-family="Liberation Sans" font-size="12.5" fill="#000">Feb</text>
<rect x="1206" y="172" width="1" height="14" fill="#000"/>
<text transform="translate(1207.0 183.8) scale(0.86 1)" font-family="Liberation Sans" font-size="12.5" fill="#000">Mar</text>
<rect x="1235" y="172" width="1" height="14" fill="#000"/>
<text transform="translate(1236.0 183.8) scale(0.86 1)" font-family="Liberation Sans" font-size="12.5" fill="#000">Apr</text>
<rect x="1264" y="172" width="1" height="14" fill="#000"/>
<text transform="translate(1265.0 183.8) scale(0.86 1)" font-family="Liberation Sans" font-size="12.5" fill="#000">May</text>
<rect x="1293" y="172" width="1" height="14" fill="#000"/>
<text transform="translate(1294.0 183.8) scale(0.86 1)" font-family="Liberation Sans" font-size="12.5" fill="#000">Jun</text>
<rect x="1322" y="172" width="1" height="14" fill="#000"/>
<text transform="translate(1323.0 183.8) scale(0.86 1)" font-family="Liberation Sans" font-size="12.5" fill="#000">Jul</text>
<rect x="1351" y="172" width="1" height="14" fill="#000"/>
<text transform="translate(1352.0 183.8) scale(0.86 1)" font-family="Liberation Sans" font-size="12.5" fill="#000">Aug</text>
<rect x="1381" y="172" width="1" height="14" fill="#000"/>
<text transform="translate(1382.0 183.8) scale(0.86 1)" font-family="Liberation Sans" font-size="12.5" fill="#000">Sep</text>
<rect x="1409" y="172" width="1" height="14" fill="#000"/>
<text transform="translate(1410.0 183.8) scale(0.86 1)" font-family="Liberation Sans" font-size="12.5" fill="#000">Oct</text>
<rect x="1438" y="172" width="1" height="14" fill="#000"/>
<text transform="translate(1439.0 183.8) scale(0.86 1)" font-family="Liberation Sans" font-size="12.5" fill="#000">Nov</text>
<rect x="1467" y="172" width="1" height="14" fill="#000"/>
<text transform="translate(1468.0 183.8) scale(0.86 1)" font-family="Liberation Sans" font-size="12.5" fill="#000">Dec</text>
<rect x="1496" y="172" width="1" height="14" fill="#000"/>
<text transform="translate(1497.0 183.8) scale(0.86 1)" font-family="Liberation Sans" font-size="12.5" fill="#000">Jan</text>
<rect x="1526" y="172" width="1" height="14" fill="#000"/>
<text transform="translate(1527.0 183.8) scale(0.86 1)" font-family="Liberation Sans" font-size="12.5" fill="#000">Feb</text>
<rect x="1553" y="172" width="1" height="14" fill="#000"/>
<text transform="translate(1554.0 183.8) scale(0.86 1)" font-family="Liberation Sans" font-size="12.5" fill="#000">Mar</text>
<rect x="1583" y="172" width="1" height="14" fill="#000"/>
<text transform="translate(1584.0 183.8) scale(0.86 1)" font-family="Liberation Sans" font-size="12.5" fill="#000">Apr</text>
<rect x="1611" y="172" width="1" height="14" fill="#000"/>
<text transform="translate(1612.0 183.8) scale(0.86 1)" font-family="Liberation Sans" font-size="12.5" fill="#000">May</text>
<rect x="1641" y="172" width="1" height="14" fill="#000"/>
<text transform="translate(1642.0 183.8) scale(0.86 1)" font-family="Liberation Sans" font-size="12.5" fill="#000">Jun</text>
<rect x="1669" y="172" width="1" height="14" fill="#000"/>
<text transform="translate(1670.0 183.8) scale(0.86 1)" font-family="Liberation Sans" font-size="12.5" fill="#000">Jul</text>
<rect x="1699" y="172" width="1" height="14" fill="#000"/>
<text transform="translate(1700.0 183.8) scale(0.86 1)" font-family="Liberation Sans" font-size="12.5" fill="#000">Aug</text>
<rect x="1728" y="172" width="1" height="14" fill="#000"/>
<text transform="translate(1729.0 183.8) scale(0.86 1)" font-family="Liberation Sans" font-size="12.5" fill="#000">Sep</text>
<rect x="1756" y="172" width="1" height="14" fill="#000"/>
<text transform="translate(1757.0 183.8) scale(0.86 1)" font-family="Liberation Sans" font-size="12.5" fill="#000">Oct</text>
<rect x="1786" y="172" width="1" height="14" fill="#000"/>
<text transform="translate(1787.0 183.8) scale(0.86 1)" font-family="Liberation Sans" font-size="12.5" fill="#000">Nov</text>
<rect x="1814" y="172" width="1" height="14" fill="#000"/>
<text transform="translate(1815.0 183.8) scale(0.86 1)" font-family="Liberation Sans" font-size="12.5" fill="#000">Dec</text>
<rect x="1844" y="172" width="1" height="14" fill="#000"/>
<text transform="translate(1845.0 183.8) scale(0.86 1)" font-family="Liberation Sans" font-size="12.5" fill="#000">Jan</text>
<rect x="1873" y="172" width="1" height="14" fill="#000"/>
<text transform="translate(1874.0 183.8) scale(0.86 1)" font-family="Liberation Sans" font-size="12.5" fill="#000">Feb</text>
<rect x="1900" y="172" width="1" height="14" fill="#000"/>
<text transform="translate(1901.0 183.8) scale(0.86 1)" font-family="Liberation Sans" font-size="12.5" fill="#000">Mar</text>
<rect x="1141" y="186" width="1" height="14" fill="#000"/>
<text transform="translate(1142.0 197.8) scale(0.86 1)" font-family="Liberation Sans" font-size="12.5" fill="#000">23</text>
<rect x="1162" y="186" width="1" height="14" fill="#000"/>
<text transform="translate(1163.0 197.8) scale(0.86 1)" font-family="Liberation Sans" font-size="12.5" fill="#000">14</text>
<rect x="1183" y="186" width="1" height="14" fill="#000"/>
<text transform="translate(1184.0 197.8) scale(0.86 1)" font-family="Liberation Sans" font-size="12.5" fill="#000">05</text>
<rect x="1204" y="186" width="1" height="14" fill="#000"/>
<text transform="translate(1205.0 197.8) scale(0.86 1)" font-family="Liberation Sans" font-size="12.5" fill="#000">27</text>
<rect x="1225" y="186" width="1" height="14" fill="#000"/>
<text transform="translate(1226.0 197.8) scale(0.86 1)" font-family="Liberation Sans" font-size="12.5" fill="#000">21</text>
<rect x="1246" y="186" width="1" height="14" fill="#000"/>
<text transform="translate(1247.0 197.8) scale(0.86 1)" font-family="Liberation Sans" font-size="12.5" fill="#000">12</text>
<rect x="1267" y="186" width="1" height="14" fill="#000"/>
<text transform="translate(1268.0 197.8) scale(0.86 1)" font-family="Liberation Sans" font-size="12.5" fill="#000">04</text>
<rect x="1288" y="186" width="1" height="14" fill="#000"/>
<text transform="translate(1289.0 197.8) scale(0.86 1)" font-family="Liberation Sans" font-size="12.5" fill="#000">26</text>
<rect x="1308" y="186" width="1" height="14" fill="#000"/>
<text transform="translate(1309.0 197.8) scale(0.86 1)" font-family="Liberation Sans" font-size="12.5" fill="#000">17</text>
<rect x="1329" y="186" width="1" height="14" fill="#000"/>
<text transform="translate(1330.0 197.8) scale(0.86 1)" font-family="Liberation Sans" font-size="12.5" fill="#000">09</text>
<rect x="1350" y="186" width="1" height="14" fill="#000"/>
<text transform="translate(1351.0 197.8) scale(0.86 1)" font-family="Liberation Sans" font-size="12.5" fill="#000">31</text>
<rect x="1371" y="186" width="1" height="14" fill="#000"/>
<text transform="translate(1372.0 197.8) scale(0.86 1)" font-family="Liberation Sans" font-size="12.5" fill="#000">22</text>
<rect x="1392" y="186" width="1" height="14" fill="#000"/>
<text transform="translate(1393.0 197.8) scale(0.86 1)" font-family="Liberation Sans" font-size="12.5" fill="#000">13</text>
<rect x="1413" y="186" width="1" height="14" fill="#000"/>
<text transform="translate(1414.0 197.8) scale(0.86 1)" font-family="Liberation Sans" font-size="12.5" fill="#000">05</text>
<rect x="1434" y="186" width="1" height="14" fill="#000"/>
<text transform="translate(1435.0 197.8) scale(0.86 1)" font-family="Liberation Sans" font-size="12.5" fill="#000">27</text>
<rect x="1455" y="186" width="1" height="14" fill="#000"/>
<text transform="translate(1456.0 197.8) scale(0.86 1)" font-family="Liberation Sans" font-size="12.5" fill="#000">18</text>
<rect x="1475" y="186" width="1" height="14" fill="#000"/>
<text transform="translate(1476.0 197.8) scale(0.86 1)" font-family="Liberation Sans" font-size="12.5" fill="#000">10</text>
<rect x="1496" y="186" width="1" height="14" fill="#000"/>
<text transform="translate(1497.0 197.8) scale(0.86 1)" font-family="Liberation Sans" font-size="12.5" fill="#000">01</text>
<rect x="1517" y="186" width="1" height="14" fill="#000"/>
<text transform="translate(1518.0 197.8) scale(0.86 1)" font-family="Liberation Sans" font-size="12.5" fill="#000">23</text>
<rect x="1538" y="186" width="1" height="14" fill="#000"/>
<text transform="translate(1539.0 197.8) scale(0.86 1)" font-family="Liberation Sans" font-size="12.5" fill="#000">14</text>
<rect x="1559" y="186" width="1" height="14" fill="#000"/>
<text transform="translate(1560.0 197.8) scale(0.86 1)" font-family="Liberation Sans" font-size="12.5" fill="#000">07</text>
<rect x="1580" y="186" width="1" height="14" fill="#000"/>
<text transform="translate(1581.0 197.8) scale(0.86 1)" font-family="Liberation Sans" font-size="12.5" fill="#000">29</text>
<rect x="1601" y="186" width="1" height="14" fill="#000"/>
<text transform="translate(1602.0 197.8) scale(0.86 1)" font-family="Liberation Sans" font-size="12.5" fill="#000">20</text>
<rect x="1622" y="186" width="1" height="14" fill="#000"/>
<text transform="translate(1623.0 197.8) scale(0.86 1)" font-family="Liberation Sans" font-size="12.5" fill="#000">12</text>
<rect x="1643" y="186" width="1" height="14" fill="#000"/>
<text transform="translate(1644.0 197.8) scale(0.86 1)" font-family="Liberation Sans" font-size="12.5" fill="#000">03</text>
<rect x="1663" y="186" width="1" height="14" fill="#000"/>
<text transform="translate(1664.0 197.8) scale(0.86 1)" font-family="Liberation Sans" font-size="12.5" fill="#000">25</text>
<rect x="1684" y="186" width="1" height="14" fill="#000"/>
<text transform="translate(1685.0 197.8) scale(0.86 1)" font-family="Liberation Sans" font-size="12.5" fill="#000">17</text>
<rect x="1705" y="186" width="1" height="14" fill="#000"/>
<text transform="translate(1706.0 197.8) scale(0.86 1)" font-family="Liberation Sans" font-size="12.5" fill="#000">08</text>
<rect x="1726" y="186" width="1" height="14" fill="#000"/>
<text transform="translate(1727.0 197.8) scale(0.86 1)" font-family="Liberation Sans" font-size="12.5" fill="#000">30</text>
<rect x="1747" y="186" width="1" height="14" fill="#000"/>
<text transform="translate(1748.0 197.8) scale(0.86 1)" font-family="Liberation Sans" font-size="12.5" fill="#000">21</text>
<rect x="1768" y="186" width="1" height="14" fill="#000"/>
<text transform="translate(1769.0 197.8) scale(0.86 1)" font-family="Liberation Sans" font-size="12.5" fill="#000">13</text>
<rect x="1789" y="186" width="1" height="14" fill="#000"/>
<text transform="translate(1790.0 197.8) scale(0.86 1)" font-family="Liberation Sans" font-size="12.5" fill="#000">04</text>
<rect x="1810" y="186" width="1" height="14" fill="#000"/>
<text transform="translate(1811.0 197.8) scale(0.86 1)" font-family="Liberation Sans" font-size="12.5" fill="#000">26</text>
<rect x="1830" y="186" width="1" height="14" fill="#000"/>
<text transform="translate(1831.0 197.8) scale(0.86 1)" font-family="Liberation Sans" font-size="12.5" fill="#000">18</text>
<rect x="1851" y="186" width="1" height="14" fill="#000"/>
<text transform="translate(1852.0 197.8) scale(0.86 1)" font-family="Liberation Sans" font-size="12.5" fill="#000">09</text>
<rect x="1872" y="186" width="1" height="14" fill="#000"/>
<text transform="translate(1873.0 197.8) scale(0.86 1)" font-family="Liberation Sans" font-size="12.5" fill="#000">31</text>
<rect x="1893" y="186" width="1" height="14" fill="#000"/>
<text transform="translate(1894.0 197.8) scale(0.86 1)" font-family="Liberation Sans" font-size="12.5" fill="#000">22</text>
<rect x="1914" y="186" width="1" height="14" fill="#000"/>
<text transform="translate(1915.0 197.8) scale(0.86 1)" font-family="Liberation Sans" font-size="12.5" fill="#000">16</text>
</g>
<g clip-path="url(#gclip)">
<path d="M1150.5 202V1031 M1150.5 202V1031 M1179.5 202V1031 M1206.5 202V1031 M1235.5 202V1031 M1264.5 202V1031 M1293.5 202V1031 M1322.5 202V1031 M1351.5 202V1031 M1381.5 202V1031 M1409.5 202V1031 M1438.5 202V1031 M1467.5 202V1031 M1496.5 202V1031 M1526.5 202V1031 M1553.5 202V1031 M1583.5 202V1031 M1611.5 202V1031 M1641.5 202V1031 M1669.5 202V1031 M1699.5 202V1031 M1728.5 202V1031 M1756.5 202V1031 M1786.5 202V1031 M1814.5 202V1031 M1844.5 202V1031 M1873.5 202V1031 M1900.5 202V1031 M1142 219.5H1902 M1142 238.5H1902 M1142 257.5H1902 M1142 276.5H1902 M1142 295.5H1902 M1142 314.5H1902 M1142 333.5H1902 M1142 352.5H1902 M1142 371.5H1902 M1142 390.5H1902 M1142 409.5H1902 M1142 428.5H1902 M1142 447.5H1902 M1142 466.5H1902 M1142 485.5H1902 M1142 504.5H1902 M1142 523.5H1902 M1142 542.5H1902 M1142 561.5H1902 M1142 580.5H1902 M1142 599.5H1902 M1142 618.5H1902 M1142 637.5H1902 M1142 656.5H1902 M1142 675.5H1902 M1142 694.5H1902 M1142 713.5H1902 M1142 732.5H1902 M1142 751.5H1902 M1142 770.5H1902 M1142 789.5H1902 M1142 808.5H1902 M1142 827.5H1902 M1142 846.5H1902 M1142 865.5H1902 M1142 884.5H1902 M1142 903.5H1902 M1142 922.5H1902 M1142 941.5H1902 M1142 960.5H1902 M1142 979.5H1902 M1142 998.5H1902 M1142 1017.5H1902" stroke="#c0c0c0" stroke-width="1" fill="none"/>
<path d="M1156.5 201V1031" stroke="#ff0000" stroke-width="1"/>
<rect x="1198.5" y="203" width="624.5" height="7" fill="#000"/>
<rect x="1210.5" y="204" width="600.0" height="4" fill="url(#sband)"/>
<path d="M1198.5 203 H1210.5 V210 L1204.5 217 L1198.5 210 Z" fill="#000"/>
<path d="M1199.5 204 H1209.5 V210 L1204.5 215.3 L1199.5 210 Z" fill="url(#cap)"/>
<path d="M1810.5 203 H1822.5 V210 L1816.5 217 L1810.5 210 Z" fill="#000"/>
<path d="M1811.5 204 H1821.5 V210 L1816.5 215.3 L1811.5 210 Z" fill="url(#cap)"/>
<rect x="1204.5" y="222.5" width="62" height="13" fill="url(#bar)" stroke="#000" stroke-width="1"/>
<rect x="1801.5" y="241.5" width="14" height="13" fill="url(#bar)" stroke="#000" stroke-width="1"/>
<rect x="1150.5" y="260" width="743.5" height="7" fill="#000"/>
<rect x="1162.5" y="261" width="719.0" height="4" fill="url(#sband)"/>
<path d="M1150.5 260 H1162.5 V267 L1156.5 274 L1150.5 267 Z" fill="#000"/>
<path d="M1151.5 261 H1161.5 V267 L1156.5 272.3 L1151.5 267 Z" fill="url(#cap)"/>
<path d="M1881.5 260 H1893.5 V267 L1887.5 274 L1881.5 267 Z" fill="#000"/>
<path d="M1882.5 261 H1892.5 V267 L1887.5 272.3 L1882.5 267 Z" fill="url(#cap)"/>
<path d="M1149.5 279 H1164.5 L1157.0 293 Z" fill="#000"/>
<text x="1167.5" y="289.5" font-family="Liberation Serif" font-size="12" fill="#000" letter-spacing="-0.2">07.Jan.2019</text>
<rect x="1156.5" y="298.5" width="10" height="13" fill="url(#bar)" stroke="#ff0000" stroke-width="1"/>
<path d="M1162.5 317 H1177.5 L1170.0 331 Z" fill="#000"/>
<text x="1180.5" y="327.5" font-family="Liberation Serif" font-size="12" fill="#000" letter-spacing="-0.2">21.Jan.2019</text>
<rect x="1169.5" y="336.5" width="44" height="13" fill="url(#bar)" stroke="#ff0000" stroke-width="1"/>
<rect x="1204.5" y="355.5" width="28" height="13" fill="url(#bar)" stroke="#ff0000" stroke-width="1"/>
<rect x="1232.5" y="374.5" width="34" height="13" fill="url(#bar)" stroke="#ff0000" stroke-width="1"/>
<rect x="1257.5" y="393.5" width="62" height="13" fill="url(#bar)" stroke="#ff0000" stroke-width="1"/>
<path d="M1315.5 412 H1330.5 L1323.0 426 Z" fill="#000"/>
<text x="1333.5" y="422.5" font-family="Liberation Serif" font-size="12" fill="#000" letter-spacing="-0.2">01.Jul.2019</text>
<rect x="1322.5" y="431.5" width="81" height="13" fill="url(#bar)" stroke="#ff0000" stroke-width="1"/>
<path d="M1397.5 450 H1412.5 L1405.0 464 Z" fill="#000"/>
<text x="1415.5" y="460.5" font-family="Liberation Serif" font-size="12" fill="#000" letter-spacing="-0.2">26.Sep.2019</text>
<rect x="1408.5" y="469.5" width="239" height="13" fill="url(#bar)" stroke="#ff0000" stroke-width="1"/>
<path d="M1640.5 488 H1655.5 L1648.0 502 Z" fill="#000"/>
<text x="1658.5" y="498.5" font-family="Liberation Serif" font-size="12" fill="#000" letter-spacing="-0.2">08.Jun.2020</text>
<path d="M1641.5 507 H1656.5 L1649.0 521 Z" fill="#000"/>
<text x="1659.5" y="517.5" font-family="Liberation Serif" font-size="12" fill="#000" letter-spacing="-0.2">09.Jun.2020</text>
<rect x="1648.5" y="526.5" width="123" height="13" fill="url(#bar)" stroke="#ff0000" stroke-width="1"/>
<rect x="1772.5" y="545.5" width="8" height="13" fill="url(#bar)" stroke="#ff0000" stroke-width="1"/>
<rect x="1781.5" y="564.5" width="11" height="13" fill="url(#bar)" stroke="#ff0000" stroke-width="1"/>
<rect x="1793.5" y="583.5" width="6" height="13" fill="url(#bar)" stroke="#ff0000" stroke-width="1"/>
<path d="M1794.5 602 H1809.5 L1802.0 616 Z" fill="#000"/>
<text x="1812.5" y="612.5" font-family="Liberation Serif" font-size="12" fill="#000" letter-spacing="-0.2">17.Nov.2020</text>
<rect x="1801.5" y="621.5" width="49" height="13" fill="url(#bar)" stroke="#ff0000" stroke-width="1"/>
<rect x="1833.5" y="640.5" width="53" height="13" fill="url(#bar)" stroke="#ff0000" stroke-width="1"/>
<path d="M1879.5 659 H1894.5 L1887.0 673 Z" fill="#000"/>
<text x="1897.5" y="669.5" font-family="Liberation Serif" font-size="12" fill="#000" letter-spacing="-0.2">14.Feb.2021</text>
<rect x="1198.5" y="678" width="41.5" height="7" fill="#000"/>
<rect x="1210.5" y="679" width="17.0" height="4" fill="url(#sband)"/>
<path d="M1198.5 678 H1210.5 V685 L1204.5 692 L1198.5 685 Z" fill="#000"/>
<path d="M1199.5 679 H1209.5 V685 L1204.5 690.3 L1199.5 685 Z" fill="url(#cap)"/>
<path d="M1227.5 678 H1239.5 V685 L1233.5 692 L1227.5 685 Z" fill="#000"/>
<path d="M1228.5 679 H1238.5 V685 L1233.5 690.3 L1228.5 685 Z" fill="url(#cap)"/>
<rect x="1204.5" y="697.5" width="28" height="13" fill="url(#bar)" stroke="#ff0000" stroke-width="1"/>
<rect x="1402.5" y="716" width="252.5" height="7" fill="#000"/>
<rect x="1414.5" y="717" width="228.0" height="4" fill="url(#sband)"/>
<path d="M1402.5 716 H1414.5 V723 L1408.5 730 L1402.5 723 Z" fill="#000"/>
<path d="M1403.5 717 H1413.5 V723 L1408.5 728.3 L1403.5 723 Z" fill="url(#cap)"/>
<path d="M1642.5 716 H1654.5 V723 L1648.5 730 L1642.5 723 Z" fill="#000"/>
<path d="M1643.5 717 H1653.5 V723 L1648.5 728.3 L1643.5 723 Z" fill="url(#cap)"/>
<rect x="1408.5" y="735.5" width="239" height="13" fill="url(#bar)" stroke="#ff0000" stroke-width="1"/>
<rect x="1402.5" y="754" width="252.5" height="7" fill="#000"/>
<rect x="1414.5" y="755" width="228.0" height="4" fill="url(#sband)"/>
<path d="M1402.5 754 H1414.5 V761 L1408.5 768 L1402.5 761 Z" fill="#000"/>
<path d="M1403.5 755 H1413.5 V761 L1408.5 766.3 L1403.5 761 Z" fill="url(#cap)"/>
<path d="M1642.5 754 H1654.5 V761 L1648.5 768 L1642.5 761 Z" fill="#000"/>
<path d="M1643.5 755 H1653.5 V761 L1648.5 766.3 L1643.5 761 Z" fill="url(#cap)"/>
<rect x="1408.5" y="773.5" width="239" height="13" fill="url(#bar)" stroke="#ff0000" stroke-width="1"/>
<rect x="1336.5" y="792" width="100.5" height="7" fill="#000"/>
<rect x="1348.5" y="793" width="76.0" height="4" fill="url(#sband)"/>
<path d="M1336.5 792 H1348.5 V799 L1342.5 806 L1336.5 799 Z" fill="#000"/>
<path d="M1337.5 793 H1347.5 V799 L1342.5 804.3 L1337.5 799 Z" fill="url(#cap)"/>
<path d="M1424.5 792 H1436.5 V799 L1430.5 806 L1424.5 799 Z" fill="#000"/>
<path d="M1425.5 793 H1435.5 V799 L1430.5 804.3 L1425.5 799 Z" fill="url(#cap)"/>
<rect x="1342.5" y="811.5" width="87" height="13" fill="url(#bar)" stroke="#000" stroke-width="1"/>
<rect x="1399.5" y="830" width="252.5" height="7" fill="#000"/>
<rect x="1411.5" y="831" width="228.0" height="4" fill="url(#sband)"/>
<path d="M1399.5 830 H1411.5 V837 L1405.5 844 L1399.5 837 Z" fill="#000"/>
<path d="M1400.5 831 H1410.5 V837 L1405.5 842.3 L1400.5 837 Z" fill="url(#cap)"/>
<path d="M1639.5 830 H1651.5 V837 L1645.5 844 L1639.5 837 Z" fill="#000"/>
<path d="M1640.5 831 H1650.5 V837 L1645.5 842.3 L1640.5 837 Z" fill="url(#cap)"/>
<rect x="1405.5" y="849.5" width="239" height="13" fill="url(#bar)" stroke="#000" stroke-width="1"/>
<rect x="1398.5" y="868" width="252.5" height="7" fill="#000"/>
<rect x="1410.5" y="869" width="228.0" height="4" fill="url(#sband)"/>
<path d="M1398.5 868 H1410.5 V875 L1404.5 882 L1398.5 875 Z" fill="#000"/>
<path d="M1399.5 869 H1409.5 V875 L1404.5 880.3 L1399.5 875 Z" fill="url(#cap)"/>
<path d="M1638.5 868 H1650.5 V875 L1644.5 882 L1638.5 875 Z" fill="#000"/>
<path d="M1639.5 869 H1649.5 V875 L1644.5 880.3 L1639.5 875 Z" fill="url(#cap)"/>
<rect x="1404.5" y="887.5" width="239" height="13" fill="url(#bar)" stroke="#000" stroke-width="1"/>
<rect x="1787.5" y="906" width="14.5" height="7" fill="#000"/>
<path d="M1787.5 906 H1799.5 V913 L1793.5 920 L1787.5 913 Z" fill="#000"/>
<path d="M1788.5 907 H1798.5 V913 L1793.5 918.3 L1788.5 913 Z" fill="url(#cap)"/>
<path d="M1789.5 906 H1801.5 V913 L1795.5 920 L1789.5 913 Z" fill="#000"/>
<path d="M1790.5 907 H1800.5 V913 L1795.5 918.3 L1790.5 913 Z" fill="url(#cap)"/>
<rect x="1793.5" y="925.5" width="3" height="13" fill="url(#bar)" stroke="#000" stroke-width="1"/>
<rect x="1787.5" y="944" width="14.5" height="7" fill="#000"/>
<path d="M1787.5 944 H1799.5 V951 L1793.5 958 L1787.5 951 Z" fill="#000"/>
<path d="M1788.5 945 H1798.5 V951 L1793.5 956.3 L1788.5 951 Z" fill="url(#cap)"/>
<path d="M1789.5 944 H1801.5 V951 L1795.5 958 L1789.5 951 Z" fill="#000"/>
<path d="M1790.5 945 H1800.5 V951 L1795.5 956.3 L1790.5 951 Z" fill="url(#cap)"/>
<rect x="1793.5" y="963.5" width="3" height="13" fill="url(#bar)" stroke="#000" stroke-width="1"/>
<rect x="1251.5" y="982" width="44.5" height="7" fill="#000"/>
<rect x="1263.5" y="983" width="20.0" height="4" fill="url(#sband)"/>
<path d="M1251.5 982 H1263.5 V989 L1257.5 996 L1251.5 989 Z" fill="#000"/>
<path d="M1252.5 983 H1262.5 V989 L1257.5 994.3 L1252.5 989 Z" fill="url(#cap)"/>
<path d="M1283.5 982 H1295.5 V989 L1289.5 996 L1283.5 989 Z" fill="#000"/>
<path d="M1284.5 983 H1294.5 V989 L1289.5 994.3 L1284.5 989 Z" fill="url(#cap)"/>
<rect x="1257.5" y="1001.5" width="31" height="13" fill="url(#bar)" stroke="#000" stroke-width="1"/>
<path d="M1157.5 286.5 L1162.5 286.5 L1162.5 298.5" stroke="#ff0000" stroke-width="1" fill="none"/>
<path d="M1162.5 299.0 L1158.5 294.5 L1166.5 294.5 Z" fill="#ff0000"/>
<path d="M1166.5 305.5 L1179.5 305.5 L1179.5 324.5 L1171.5 324.5" stroke="#ff0000" stroke-width="1" fill="none"/>
<path d="M1171.0 324.5 L1175.5 320.5 L1175.5 328.5 Z" fill="#ff0000"/>
<path d="M1174.5 324.5 L1174.5 336.5" stroke="#ff0000" stroke-width="1" fill="none"/>
<path d="M1174.5 337.0 L1170.5 332.5 L1178.5 332.5 Z" fill="#ff0000"/>
<path d="M1224.5 343.5 L1224.5 352.5 L1194.5 352.5 L1194.5 704.5 L1204.5 704.5" stroke="#ff0000" stroke-width="1" fill="none"/>
<path d="M1205.0 704.5 L1200.5 700.5 L1200.5 708.5 Z" fill="#ff0000"/>
<path d="M1194.5 362.5 L1204.5 362.5" stroke="#ff0000" stroke-width="1" fill="none"/>
<path d="M1205.0 362.5 L1200.5 358.5 L1200.5 366.5 Z" fill="#ff0000"/>
<path d="M1232.5 362.5 L1238.5 362.5 L1238.5 374.5" stroke="#ff0000" stroke-width="1" fill="none"/>
<path d="M1238.5 375.0 L1234.5 370.5 L1242.5 370.5 Z" fill="#ff0000"/>
<path d="M1232.5 704.5 L1238.5 704.5 L1238.5 387.5" stroke="#ff0000" stroke-width="1" fill="none"/>
<path d="M1238.5 387.0 L1234.5 391.5 L1242.5 391.5 Z" fill="#ff0000"/>
<path d="M1266.5 381.5 L1277.5 381.5 L1277.5 390.5 L1247.5 390.5 L1247.5 400.5 L1257.5 400.5" stroke="#ff0000" stroke-width="1" fill="none"/>
<path d="M1258.0 400.5 L1253.5 396.5 L1253.5 404.5 Z" fill="#ff0000"/>
<path d="M1319.5 400.5 L1332.5 400.5 L1332.5 419.5" stroke="#ff0000" stroke-width="1" fill="none"/>
<path d="M1327.5 419.5 L1327.5 431.5" stroke="#ff0000" stroke-width="1" fill="none"/>
<path d="M1327.5 432.0 L1323.5 427.5 L1331.5 427.5 Z" fill="#ff0000"/>
<path d="M1403.5 438.5 L1414.5 438.5 L1414.5 457.5" stroke="#ff0000" stroke-width="1" fill="none"/>
<path d="M1409.5 457.5 L1409.5 469.5" stroke="#ff0000" stroke-width="1" fill="none"/>
<path d="M1409.5 470.0 L1405.5 465.5 L1413.5 465.5 Z" fill="#ff0000"/>
<path d="M1409.5 482.5 L1409.5 735.5" stroke="#ff0000" stroke-width="1" fill="none"/>
<path d="M1409.5 736.0 L1405.5 731.5 L1413.5 731.5 Z" fill="#ff0000"/>
<path d="M1409.5 735.5 L1409.5 771.5" stroke="#ff0000" stroke-width="1" fill="none"/>
<path d="M1409.5 772.0 L1405.5 767.5 L1413.5 767.5 Z" fill="#ff0000"/>
<path d="M1647.5 476.5 L1658.5 476.5 L1658.5 495.5" stroke="#ff0000" stroke-width="1" fill="none"/>
<path d="M1658.5 514.5 L1650.5 514.5" stroke="#ff0000" stroke-width="1" fill="none"/>
<path d="M1650.0 514.5 L1654.5 510.5 L1654.5 518.5 Z" fill="#ff0000"/>
<path d="M1653.5 514.5 L1653.5 526.5" stroke="#ff0000" stroke-width="1" fill="none"/>
<path d="M1653.5 527.0 L1649.5 522.5 L1657.5 522.5 Z" fill="#ff0000"/>
<path d="M1647.5 741.5 L1658.5 741.5" stroke="#ff0000" stroke-width="1" fill="none"/>
<path d="M1647.5 779.5 L1658.5 779.5" stroke="#ff0000" stroke-width="1" fill="none"/>
<path d="M1771.5 533.5 L1777.5 533.5 L1777.5 545.5" stroke="#ff0000" stroke-width="1" fill="none"/>
<path d="M1777.5 546.0 L1773.5 541.5 L1781.5 541.5 Z" fill="#ff0000"/>
<path d="M1780.5 552.5 L1786.5 552.5 L1786.5 564.5" stroke="#ff0000" stroke-width="1" fill="none"/>
<path d="M1786.5 565.0 L1782.5 560.5 L1790.5 560.5 Z" fill="#ff0000"/>
<path d="M1791.5 571.5 L1797.5 571.5 L1797.5 583.5" stroke="#ff0000" stroke-width="1" fill="none"/>
<path d="M1797.5 584.0 L1793.5 579.5 L1801.5 579.5 Z" fill="#ff0000"/>
<path d="M1799.5 590.5 L1811.5 590.5 L1811.5 609.5" stroke="#ff0000" stroke-width="1" fill="none"/>
<path d="M1806.5 609.5 L1806.5 621.5" stroke="#ff0000" stroke-width="1" fill="none"/>
<path d="M1806.5 622.0 L1802.5 617.5 L1810.5 617.5 Z" fill="#ff0000"/>
<path d="M1850.5 628.5 L1861.5 628.5 L1861.5 637.5 L1823.5 637.5 L1823.5 647.5 L1833.5 647.5" stroke="#ff0000" stroke-width="1" fill="none"/>
<path d="M1834.0 647.5 L1829.5 643.5 L1829.5 651.5 Z" fill="#ff0000"/>
<path d="M1885.5 647.5 L1896.5 647.5 L1896.5 666.5 L1888.5 666.5" stroke="#ff0000" stroke-width="1" fill="none"/>
<path d="M1888.0 666.5 L1892.5 662.5 L1892.5 670.5 Z" fill="#ff0000"/>
<path d="M1213.5 343.5 L1224.5 343.5 L1224.5 334.5 L1194.5 334.5 L1194.5 229.5 L1204.5 229.5" stroke="#1a4f8f" stroke-width="1" fill="none"/>
<path d="M1205.0 229.5 L1200.5 225.5 L1200.5 233.5 Z" fill="#1a4f8f"/>
<path d="M1266.5 229.5 L1332.5 229.5 L1332.5 400.5" stroke="#1a4f8f" stroke-width="1" fill="none"/>
<path d="M1332.5 419.5 L1332.5 1008.5 L1289.5 1008.5" stroke="#1a4f8f" stroke-width="1" fill="none"/>
<path d="M1332.5 419.5 L1323.5 419.5" stroke="#1a4f8f" stroke-width="1" fill="none"/>
<path d="M1323.0 419.5 L1327.5 415.5 L1327.5 423.5 Z" fill="#1a4f8f"/>
<path d="M1247.5 390.5 L1247.5 1008.5 L1257.5 1008.5" stroke="#1a4f8f" stroke-width="1" fill="none"/>
<path d="M1258.0 1008.5 L1253.5 1004.5 L1253.5 1012.5 Z" fill="#1a4f8f"/>
<path d="M1312.5 438.5 L1322.5 438.5" stroke="#1a4f8f" stroke-width="1" fill="none"/>
<path d="M1312.5 438.5 L1312.5 818.5 L1342.5 818.5" stroke="#1a4f8f" stroke-width="1" fill="none"/>
<path d="M1343.0 818.5 L1338.5 814.5 L1338.5 822.5 Z" fill="#1a4f8f"/>
<path d="M1440.5 818.5 L1429.5 818.5" stroke="#1a4f8f" stroke-width="1" fill="none"/>
<path d="M1440.5 818.5 L1440.5 457.5 L1405.5 457.5" stroke="#1a4f8f" stroke-width="1" fill="none"/>
<path d="M1405.0 457.5 L1409.5 453.5 L1409.5 461.5 Z" fill="#1a4f8f"/>
<path d="M1409.5 771.5 L1409.5 847.5" stroke="#1a4f8f" stroke-width="1" fill="none"/>
<path d="M1409.5 848.0 L1405.5 843.5 L1413.5 843.5 Z" fill="#1a4f8f"/>
<path d="M1409.5 847.5 L1409.5 885.5" stroke="#1a4f8f" stroke-width="1" fill="none"/>
<path d="M1409.5 886.0 L1405.5 881.5 L1413.5 881.5 Z" fill="#1a4f8f"/>
<path d="M1649.5 495.5 L1658.5 495.5 L1658.5 894.5 L1643.5 894.5" stroke="#1a4f8f" stroke-width="1" fill="none"/>
<path d="M1658.5 856.5 L1644.5 856.5" stroke="#1a4f8f" stroke-width="1" fill="none"/>
<path d="M1815.5 248.5 L1896.5 248.5 L1896.5 647.5" stroke="#1a4f8f" stroke-width="1" fill="none"/>
<path d="M1806.5 609.5 L1806.5 255.5" stroke="#1a4f8f" stroke-width="1" fill="none"/>
<path d="M1806.5 255.0 L1802.5 259.5 L1810.5 259.5 Z" fill="#1a4f8f"/>
<path d="M1811.5 590.5 L1811.5 970.5 L1794.5 970.5" stroke="#1a4f8f" stroke-width="1" fill="none"/>
<path d="M1811.5 932.5 L1794.5 932.5" stroke="#1a4f8f" stroke-width="1" fill="none"/>
<path d="M1811.5 609.5 L1802.5 609.5" stroke="#1a4f8f" stroke-width="1" fill="none"/>
<path d="M1802.0 609.5 L1806.5 605.5 L1806.5 613.5 Z" fill="#1a4f8f"/>
<path d="M1797.5 583.5 L1797.5 923.5" stroke="#1a4f8f" stroke-width="1" fill="none"/>
<path d="M1797.5 924.0 L1793.5 919.5 L1801.5 919.5 Z" fill="#1a4f8f"/>
<path d="M1797.5 923.5 L1797.5 961.5" stroke="#1a4f8f" stroke-width="1" fill="none"/>
<path d="M1797.5 962.0 L1793.5 957.5 L1801.5 957.5 Z" fill="#1a4f8f"/>
<path d="M1323.5 419.5 L1323.5 419.5" stroke="#1a4f8f" stroke-width="1" fill="none"/>
<path d="M1323.0 419.5 L1327.5 415.5 L1327.5 423.5 Z" fill="#1a4f8f"/>
<path d="M1405.5 457.5 L1405.5 457.5" stroke="#1a4f8f" stroke-width="1" fill="none"/>
<path d="M1405.0 457.5 L1409.5 453.5 L1409.5 461.5 Z" fill="#1a4f8f"/>
<path d="M1649.5 495.5 L1649.5 495.5" stroke="#1a4f8f" stroke-width="1" fill="none"/>
<path d="M1649.0 495.5 L1653.5 491.5 L1653.5 499.5 Z" fill="#1a4f8f"/>
<path d="M1649.5 514.5 L1649.5 514.5" stroke="#ff0000" stroke-width="1" fill="none"/>
<path d="M1649.0 514.5 L1653.5 510.5 L1653.5 518.5 Z" fill="#ff0000"/>
<path d="M1802.5 609.5 L1802.5 609.5" stroke="#1a4f8f" stroke-width="1" fill="none"/>
<path d="M1802.0 609.5 L1806.5 605.5 L1806.5 613.5 Z" fill="#1a4f8f"/>
<path d="M1887.5 666.5 L1887.5 666.5" stroke="#ff0000" stroke-width="1" fill="none"/>
<path d="M1887.0 666.5 L1891.5 662.5 L1891.5 670.5 Z" fill="#ff0000"/>
<path d="M1171.5 324.5 L1171.5 324.5" stroke="#ff0000" stroke-width="1" fill="none"/>
<path d="M1171.0 324.5 L1175.5 320.5 L1175.5 328.5 Z" fill="#ff0000"/>
</g>
<rect x="1142" y="1031" width="778" height="2" fill="#6d6d6d"/>
<rect x="1902" y="201" width="16" height="830" fill="#f0f0f0"/>
<rect x="1910" y="219" width="2" height="17" fill="#8a8a8a"/>
<rect x="1918" y="201" width="1" height="860" fill="#6d6d6d"/>
<rect x="1919" y="158" width="1" height="922" fill="#f0f0f0"/>
</svg>
<div style="position:absolute;left:0px;top:1031px;width:1142px;height:2px;background:#6d6d6d;"></div>
<div style="position:absolute;left:0px;top:1033px;width:1920px;height:26px;background:#dedede;"></div>
<div style="position:absolute;left:0px;top:1059px;width:1920px;height:3px;background:#6d6d6d;"></div>
<div style="position:absolute;left:0px;top:1060px;width:1920px;height:1px;background:#9c9c9c;"></div>
<div style="position:absolute;left:0px;top:1062px;width:1920px;height:18px;background:#f0f0f0;"></div>
<div style="position:absolute;left:0px;top:1078px;width:1920px;height:1px;background:#e2e2e2;"></div>
<div style="position:absolute;left:0px;top:1031px;width:1px;height:49px;background:#6d6d6d;"></div>
<div style="position:absolute;left:1px;top:1062px;width:1px;height:16px;background:#9a9a9a;"></div>
<svg width="260" height="26" style="left:0;top:1033px"><defs>
<linearGradient id="lbar" x1="0" y1="0" x2="0" y2="1"><stop offset="0" stop-color="#d9d9d9"/><stop offset="0.3" stop-color="#fdfdfd"/><stop offset="1" stop-color="#a9a9a9"/></linearGradient>
<linearGradient id="lcap" x1="0" y1="0" x2="0" y2="1"><stop offset="0" stop-color="#8a8a8a"/><stop offset="0.38" stop-color="#ffffff"/><stop offset="1" stop-color="#000"/></linearGradient></defs>
<rect x="5.5" y="7.5" width="29" height="13" fill="url(#lbar)" stroke="#000" stroke-width="1.2"/>
<linearGradient id="lband" x1="0" y1="0" x2="0" y2="1"><stop offset="0" stop-color="#c8c8c8"/><stop offset="0.45" stop-color="#ffffff"/><stop offset="1" stop-color="#3a3a3a"/></linearGradient>
<rect x="71.5" y="7" width="43" height="7" fill="#000"/><rect x="83.5" y="8" width="19" height="4" fill="url(#lband)"/>
<path d="M71.5 7 H83.5 V14 L77.5 21 L71.5 14 Z" fill="#000"/><path d="M72.5 8 H82.5 V14 L77.5 19.3 L72.5 14 Z" fill="url(#lcap)"/>
<path d="M102.5 7 H114.5 V14 L108.5 21 L102.5 14 Z" fill="#000"/><path d="M103.5 8 H113.5 V14 L108.5 19.3 L103.5 14 Z" fill="url(#lcap)"/>
<path d="M173 7 H187 L180 21 Z" fill="#000"/>
</svg>
<div style="position:absolute;left:39px;top:1041.42px;font-size:12.5px;line-height:12.5px;color:#000;font-family:'Liberation Sans', sans-serif;white-space:nowrap;transform:scaleX(0.85);transform-origin:0 0;">Early</div>
<div style="position:absolute;left:116px;top:1041.42px;font-size:12.5px;line-height:12.5px;color:#000;font-family:'Liberation Sans', sans-serif;white-space:nowrap;transform:scaleX(0.85);transform-origin:0 0;">Summary</div>
<div style="position:absolute;left:193px;top:1041.42px;font-size:12.5px;line-height:12.5px;color:#000;font-family:'Liberation Sans', sans-serif;white-space:nowrap;transform:scaleX(0.85);transform-origin:0 0;">Milestone</div>
<div style="position:absolute;left:1688.5px;top:1040.02px;font-size:12.5px;line-height:12.5px;color:#000;font-family:'Liberation Sans', sans-serif;white-space:nowrap;transform:scaleX(0.85);transform-origin:0 0;">Number of activities : 32</div>
<div style="position:absolute;left:1833px;top:1040.02px;font-size:12.5px;line-height:12.5px;color:#000;font-family:'Liberation Sans', sans-serif;white-space:nowrap;transform:scaleX(0.85);transform-origin:0 0;">Row 1 to 43 of 43</div>
<div style="position:absolute;left:1379px;top:1066.12px;font-size:12.5px;line-height:12.5px;color:#000;font-family:'Liberation Sans', sans-serif;white-space:nowrap;transform:scaleX(0.85);transform-origin:0 0;">Safran Project 25.1.00.36 is Connected to TEST25.1.00-14 at SAFRANSQL as SAFRANSA</div>
<svg width="70" height="19" style="left:1848px;top:1061px">
<circle cx="7" cy="6.5" r="4.5" fill="#cfe3f7" stroke="#3b6fb8" stroke-width="1.2"/><path d="M5 6.5 H9 M7 4.5 V8.5" stroke="#1a4f8f" stroke-width="1.3"/><path d="M10 10 L13.5 13.5" stroke="#a0622a" stroke-width="2.2"/>
<rect x="51.5" y="4.5" width="11" height="11" fill="#f5f5f5" stroke="#e0e0e0"/><path d="M54 8.5 H60 L57 11.5 Z" fill="#222"/>
</svg>
<div style="position:absolute;left:1866.5px;top:1064.02px;font-size:12.5px;line-height:12.5px;color:#000;font-family:'Liberation Sans', sans-serif;white-space:nowrap;transform:scaleX(0.85);transform-origin:0 0;">100%</div>
<div style="position:absolute;left:1918px;top:1031px;width:1px;height:31px;background:#6d6d6d;"></div>
<div style="position:absolute;left:1919px;top:1031px;width:1px;height:49px;background:#f0f0f0;"></div>
<div style="position:absolute;left:364px;top:321px;width:434px;height:436px;border-radius:7px;background:#e0e0e0;box-shadow:0 12px 34px rgba(0,0,0,0.40), 0 0 0 1px #a9a9a9;overflow:hidden"><div style="position:absolute;left:0;top:0;width:434px;height:30px;background:#f9f0ea"></div><div style="position:absolute;left:3px;top:56px;width:429px;height:340px;background:#f0f0f0;border-left:1px solid #fafafa;border-bottom:1px solid #fafafa;box-sizing:border-box"></div><div style="position:absolute;left:0;top:397px;width:434px;height:1px;background:#e9e9e9"></div><div style="position:absolute;left:0;top:398px;width:434px;height:1px;background:#f7f7f7"></div><div style="position:absolute;left:10px;top:62px;width:369px;height:296px;background:#f3f3f3"></div></div>
<svg width="18" height="18" style="left:371px;top:326px"><rect x="0.5" y="0.5" width="16" height="16" rx="3.5" fill="#e3202d"/>
<path d="M4.5 7 C4.5 3.5 9.5 3 11 5.5 M12.5 6.5 C14 10 11 13.5 8 12 M5.5 12.5 C3.5 10.5 5 8 7.5 8.5" stroke="#fff" stroke-width="1.5" fill="none" stroke-linecap="round"/></svg>
<div style="position:absolute;left:394px;top:330.24px;font-size:12px;line-height:12px;color:#1a1a1a;letter-spacing:-0.05px;font-family:'Liberation Sans', sans-serif;white-space:nowrap;">Schedule Options</div>
<svg width="14" height="14" style="left:776px;top:328px"><path d="M2 2 L12 12 M12 2 L2 12" stroke="#222" stroke-width="1.2"/></svg>
<div style="position:absolute;left:368px;top:357px;width:47px;height:20px;background:#f0f0f0;"></div>
<div style="position:absolute;left:373px;top:361.87px;font-size:11.5px;line-height:11.5px;color:#000;letter-spacing:-0.38px;font-family:'Liberation Sans', sans-serif;white-space:nowrap;">General</div>
<div style="position:absolute;left:416px;top:355px;width:92px;height:23px;background:#f0f0f0;"></div>
<div style="position:absolute;left:418px;top:357px;width:87px;height:18px;border:1px dotted #222"></div>
<div style="position:absolute;left:423px;top:359.97px;font-size:11.5px;line-height:11.5px;color:#000;letter-spacing:-0.38px;font-family:'Liberation Sans', sans-serif;white-space:nowrap;">Multi Float Paths</div>
<svg width="14" height="14" style="left:383px;top:391px"><circle cx="6.5" cy="6.5" r="6.5" fill="#0a5fb4"/><circle cx="6.5" cy="6.5" r="2.8" fill="#fff"/></svg>
<div style="position:absolute;left:399px;top:393.27px;font-size:11.5px;line-height:11.5px;color:#000;letter-spacing:-0.38px;font-family:'Liberation Sans', sans-serif;white-space:nowrap;">Multi Float Paths</div>
<svg width="14" height="14" style="left:487px;top:391px"><circle cx="6.5" cy="6.5" r="6" fill="#fdfdfd" stroke="#555" stroke-width="1"/></svg>
<div style="position:absolute;left:503px;top:393.27px;font-size:11.5px;line-height:11.5px;color:#000;letter-spacing:-0.38px;font-family:'Liberation Sans', sans-serif;white-space:nowrap;">Longest Path</div>
<svg width="14" height="14" style="left:591px;top:391px"><circle cx="6.5" cy="6.5" r="6" fill="#fdfdfd" stroke="#555" stroke-width="1"/></svg>
<div style="position:absolute;left:607px;top:393.27px;font-size:11.5px;line-height:11.5px;color:#000;letter-spacing:-0.38px;font-family:'Liberation Sans', sans-serif;white-space:nowrap;">None</div>
<div style="position:absolute;left:421.5px;top:434.47px;font-size:11.5px;line-height:11.5px;color:#000;letter-spacing:-0.38px;font-family:'Liberation Sans', sans-serif;white-space:nowrap;">Calculate multiple float paths using</div>
<svg width="14" height="14" style="left:421px;top:449px"><circle cx="6.5" cy="6.5" r="6.5" fill="#0a5fb4"/><circle cx="6.5" cy="6.5" r="2.8" fill="#fff"/></svg>
<div style="position:absolute;left:438px;top:451.37px;font-size:11.5px;line-height:11.5px;color:#000;letter-spacing:-0.38px;font-family:'Liberation Sans', sans-serif;white-space:nowrap;">Total Float</div>
<svg width="14" height="14" style="left:514px;top:449px"><circle cx="6.5" cy="6.5" r="6" fill="#fdfdfd" stroke="#555" stroke-width="1"/></svg>
<div style="position:absolute;left:530px;top:451.37px;font-size:11.5px;line-height:11.5px;color:#000;letter-spacing:-0.38px;font-family:'Liberation Sans', sans-serif;white-space:nowrap;">Free Float</div>
<div style="position:absolute;left:421.5px;top:482.27px;font-size:11.5px;line-height:11.5px;color:#000;letter-spacing:-0.38px;font-family:'Liberation Sans', sans-serif;white-space:nowrap;">Calculate multiple float paths ending with activity</div>
<div style="position:absolute;left:421px;top:496px;width:275px;height:14px;background:#fff;border:1px solid #b9b9b9"></div>
<div style="position:absolute;left:678px;top:497px;width:1px;height:14px;background:#e3e3e3;"></div>
<svg width="12" height="8" style="left:681px;top:502px"><path d="M1.5 2 L5.5 6 L9.5 2" stroke="#333" stroke-width="1" fill="none"/></svg>
<div style="position:absolute;left:422px;top:537.47px;font-size:11.5px;line-height:11.5px;color:#000;letter-spacing:-0.38px;font-family:'Liberation Sans', sans-serif;white-space:nowrap;">Specify the number of paths to calculate :</div>
<div style="position:absolute;left:623px;top:534px;width:72px;height:14px;background:#fff;border:1px solid #b9b9b9"></div>
<div style="position:absolute;left:680px;top:535px;width:1px;height:14px;background:#e3e3e3;"></div>
<div style="position:absolute;left:625px;top:537.47px;font-size:11.5px;line-height:11.5px;color:#000;letter-spacing:-0.38px;font-family:'Liberation Sans', sans-serif;white-space:nowrap;">10</div>
<svg width="12" height="14" style="left:682px;top:535px"><path d="M2 5.5 H9 L5.5 2 Z M2 8.5 H9 L5.5 12 Z" fill="#222"/></svg>
<svg width="14" height="14" style="left:422px;top:572px"><rect x="0.5" y="0.5" width="12" height="12" rx="2.5" fill="#fdfdfd" stroke="#555" stroke-width="1"/></svg>
<div style="position:absolute;left:441px;top:573.77px;font-size:11.5px;line-height:11.5px;color:#000;letter-spacing:-0.38px;font-family:'Liberation Sans', sans-serif;white-space:nowrap;">Include cancelled end activities</div>
<svg width="14" height="14" style="left:422px;top:609px"><rect x="0.5" y="0.5" width="12" height="12" rx="2.5" fill="#fdfdfd" stroke="#555" stroke-width="1"/></svg>
<div style="position:absolute;left:441px;top:610.77px;font-size:11.5px;line-height:11.5px;color:#000;letter-spacing:-0.38px;font-family:'Liberation Sans', sans-serif;white-space:nowrap;">Include completed end activities</div>
<svg width="14" height="14" style="left:422px;top:646px"><rect x="0.5" y="0.5" width="12" height="12" rx="2.5" fill="#fdfdfd" stroke="#555" stroke-width="1"/></svg>
<div style="position:absolute;left:441px;top:647.77px;font-size:11.5px;line-height:11.5px;color:#000;letter-spacing:-0.38px;font-family:'Liberation Sans', sans-serif;white-space:nowrap;">Include open end activities</div>
<svg width="14" height="14" style="left:377px;top:689px"><rect x="0" y="0" width="13" height="13" rx="2.5" fill="#0a5fb4"/><path d="M3 6.8 L5.4 9.2 L10 4.4" stroke="#fff" stroke-width="1.1" fill="none"/></svg>
<div style="position:absolute;left:391px;top:691.07px;font-size:11.5px;line-height:11.5px;color:#000;letter-spacing:-0.38px;font-family:'Liberation Sans', sans-serif;white-space:nowrap;">Open &lt;Multi Float Paths&gt; layout after OK/Apply</div>
<div style="position:absolute;left:557px;top:729px;width:66px;height:22px;box-sizing:border-box;background:#fdfdfd;border:1px solid #d0d0d0;border-radius:4px;font-size:11.5px;line-height:20px;text-align:center;color:#000;letter-spacing:-0.38px;font-family:'Liberation Sans', sans-serif">Apply</div>
<div style="position:absolute;left:644px;top:729px;width:66px;height:22px;box-sizing:border-box;background:#fdfdfd;border:1px solid #0a5fb4;border-radius:4px;font-size:11.5px;line-height:20px;text-align:center;color:#000;letter-spacing:-0.38px;font-family:'Liberation Sans', sans-serif">OK</div>
<div style="position:absolute;left:719px;top:729px;width:65px;height:22px;box-sizing:border-box;background:#fdfdfd;border:1px solid #d0d0d0;border-radius:4px;font-size:11.5px;line-height:20px;text-align:center;color:#000;letter-spacing:-0.38px;font-family:'Liberation Sans', sans-serif">Cancel</div>
<svg width="30" height="40" style="left:780px;top:735px"><g transform="translate(-780,-735)">
<path d="M790.5 742.5 L809.5 762 L801 762 L804.8 768.6 L799.4 770.6 L795.8 763.2 L790.5 769.5 Z" fill="#000"/>
<path d="M791.3 744.6 L807.2 761.3 L799.8 761.3 L803.6 768 L799.8 769.5 L796 762 L791.3 767.6 Z" fill="#fff"/>
<path d="M792.4 747.2 L804.6 760.2 L798.2 760.2 L802.2 767.3 L800.3 768.1 L796.2 759.9 L792.4 764.6 Z" fill="#000"/>
</g></svg>
</div></body></html>
